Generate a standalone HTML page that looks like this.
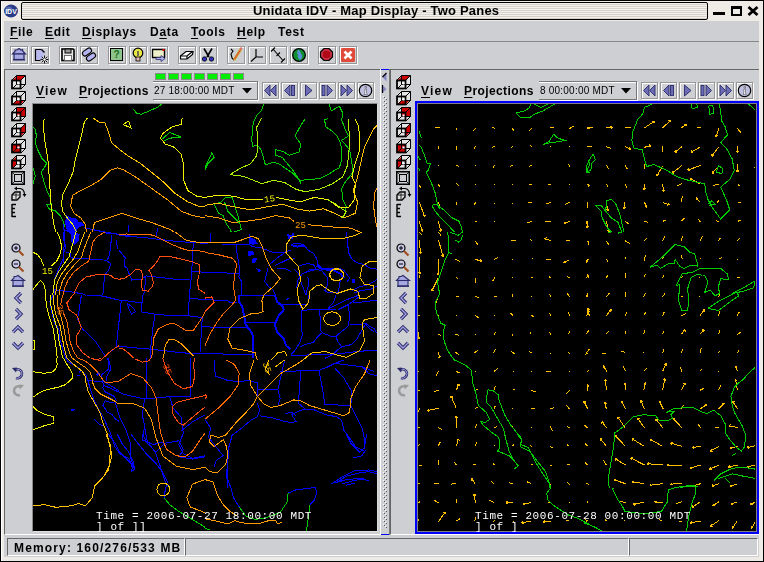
<!DOCTYPE html><html><head><meta charset="utf-8"><style>
*{box-sizing:border-box}
body{margin:0;width:764px;height:562px;overflow:hidden;background:#000;position:relative;font-family:"Liberation Sans",sans-serif}
.a{position:absolute}
.mn,.lbl,.tm,.txt{will-change:transform}
.etch{position:absolute;width:18px;height:18px;border:1px solid #979797;box-shadow:inset 1px 1px 0 #fdfdfd,1px 1px 0 #fdfdfd}
.eb{position:absolute;width:17px;height:17px;border:1px solid #979797;box-shadow:inset 1px 1px 0 #fdfdfd,1px 1px 0 #fdfdfd}
.mn{position:absolute;top:25px;font-weight:bold;font-size:12px;color:#000;line-height:14px;white-space:nowrap;letter-spacing:0.7px}
.u{text-decoration:underline;text-underline-offset:2px}
.lbl{position:absolute;font-weight:bold;font-size:12px;line-height:14px;white-space:nowrap;letter-spacing:0.6px}
.tm{position:absolute;font-size:10px;line-height:12px;white-space:nowrap;letter-spacing:0.22px}
svg{position:absolute;overflow:visible}
.mapsvg{will-change:transform}
</style></head><body>
<div class="a" style="left:1px;top:1px;width:762px;height:560px;background:#eeebe6"></div>
<div class="a" style="left:1px;top:1px;width:1px;height:560px;background:#fff"></div>
<div class="a" style="left:21px;top:2px;width:687px;height:18px;border:1px solid #000;border-radius:2px;background:repeating-linear-gradient(#f3f1ec 0 1px,#d6d2cb 1px 2px)"></div>
<div class="a txt" style="left:253px;top:3px;font-weight:bold;font-size:13px;line-height:16px;white-space:nowrap;letter-spacing:0.2px">Unidata IDV - Map Display - Two Panes</div>
<svg style="left:3px;top:3px" width="16" height="16"><ellipse cx="8" cy="8" rx="7" ry="6.5" fill="#2a3c88"/><ellipse cx="6" cy="6" rx="3" ry="2.5" fill="#7a90c8" opacity="0.6"/><text x="8" y="10.5" font-size="7" font-weight="bold" fill="#fff" text-anchor="middle" font-family="Liberation Sans">IDV</text></svg>
<div class="a" style="left:713px;top:12px;width:12px;height:3px;background:#000"></div>
<div class="a" style="left:731px;top:6px;width:11px;height:10px;border:2px solid #000;border-top-width:3px"></div>
<svg style="left:747px;top:6px" width="12" height="10"><path d="M1.5 1 L10.5 9 M10.5 1 L1.5 9" stroke="#000" stroke-width="2.8"/></svg>
<div class="a" style="left:4px;top:21px;width:755px;height:536px;background:#cecfd2"></div>
<div class="mn" style="left:10px"><span class="u">F</span>ile</div>
<div class="mn" style="left:45px"><span class="u">E</span>dit</div>
<div class="mn" style="left:82px"><span class="u">D</span>isplays</div>
<div class="mn" style="left:150px">D<span class="u">a</span>ta</div>
<div class="mn" style="left:191px"><span class="u">T</span>ools</div>
<div class="mn" style="left:237px"><span class="u">H</span>elp</div>
<div class="mn" style="left:278px">Test</div>
<div class="a" style="left:4px;top:41px;width:755px;height:1px;background:#888"></div>
<div class="etch" style="left:10px;top:46px"></div>
<svg style="left:10px;top:46px" width="18" height="18"><path d="M2.5 8 L5 5.5 L5 4 L7 4 L9 2.5 L11 4 L12.5 3.5 L13 5.5 L15.5 8 Z" fill="#a8a8e0" stroke="#2a2a6a" stroke-width="1.2"/><rect x="4" y="8" width="10" height="5.5" fill="#a8a8e0" stroke="#2a2a6a" stroke-width="1.2"/><path d="M3 13.8 H15" stroke="#2a2a6a" stroke-width="1.4"/></svg>
<div class="etch" style="left:31px;top:46px"></div>
<svg style="left:31px;top:46px" width="18" height="18"><path d="M4.5 3.5 H10.5 L13.5 6.5 V10 M9.5 14.5 H4.5 Z" fill="#c0c0f0"/><rect x="5" y="4" width="7" height="10" fill="#b8b8ec"/><path d="M10.5 3.5 L13.5 6.5" stroke="#000" stroke-width="1.4"/><path d="M4.5 3.5 H10.5 M4.5 3.5 V14.5 H9.5" fill="none" stroke="#000" stroke-width="1.2"/><path d="M13.5 9.5 V17.5 M9.5 13.5 H17.5 M10.7 10.7 L16.3 16.3 M16.3 10.7 L10.7 16.3" stroke="#000" stroke-width="0.9"/><circle cx="13.5" cy="13.5" r="1.2" fill="#fff"/></svg>
<div class="etch" style="left:59px;top:46px"></div>
<svg style="left:59px;top:46px" width="18" height="18"><path d="M3 3 H14 L15 4 V14.5 H3 Z" fill="#e8e8e8" stroke="#000" stroke-width="1.6"/><rect x="6" y="3" width="6" height="4" fill="#999" stroke="#000" stroke-width="1"/><rect x="5.5" y="9.5" width="7" height="5" fill="#fff" stroke="#555" stroke-width="0.8"/></svg>
<div class="etch" style="left:80px;top:46px"></div>
<svg style="left:80px;top:46px" width="18" height="18"><g transform="rotate(-35 7 6)"><rect x="2" y="3.5" width="10" height="5" rx="2.5" fill="#b4b4f0" stroke="#000" stroke-width="1.1"/></g><g transform="rotate(-35 11 11)"><rect x="6" y="8.5" width="10" height="5" rx="2.5" fill="#b4b4f0" stroke="#000" stroke-width="1.1"/></g></svg>
<div class="etch" style="left:108px;top:46px"></div>
<svg style="left:108px;top:46px" width="18" height="18"><rect x="2.5" y="2.5" width="12" height="12" fill="#8cc48c" stroke="#000" stroke-width="1"/><text x="8.5" y="12" font-size="10" font-weight="bold" fill="#1a6a1a" text-anchor="middle" font-family="Liberation Sans">?</text></svg>
<div class="etch" style="left:129px;top:46px"></div>
<svg style="left:129px;top:46px" width="18" height="18"><circle cx="9" cy="7" r="4.8" fill="#e8e840" stroke="#000" stroke-width="1.2"/><rect x="7" y="11" width="4" height="4" fill="#e8b8b8" stroke="#000" stroke-width="0.8"/><rect x="8.2" y="5" width="1.6" height="5" fill="#555"/></svg>
<div class="etch" style="left:150px;top:46px"></div>
<svg style="left:150px;top:46px" width="18" height="18"><rect x="2.5" y="3.5" width="12" height="8" fill="#eeeec8" stroke="#000" stroke-width="1.4"/><rect x="12.5" y="3" width="2" height="2" fill="#e00"/><path d="M6 11.5 H11 V9.5 L15 12.5 L11 15.5 V13.5 H6 Z" fill="#b0b0ee" stroke="#2a2a6a" stroke-width="0.8"/></svg>
<div class="etch" style="left:178px;top:46px"></div>
<svg style="left:178px;top:46px" width="18" height="18"><path d="M2.5 10 L8 5.5 H15 L14.5 8.5 L9 13 H2.5 Z" fill="#fff" stroke="#000" stroke-width="1.2"/><path d="M2.5 10 H9 L14.5 5.5 M9 10 V13" fill="none" stroke="#000" stroke-width="1.2"/></svg>
<div class="etch" style="left:199px;top:46px"></div>
<svg style="left:199px;top:46px" width="18" height="18"><path d="M5 2.5 L10 11 M13 2.5 L8 11" stroke="#000" stroke-width="1.6"/><circle cx="5.5" cy="13" r="2.2" fill="#3030c0" stroke="#000" stroke-width="0.8"/><circle cx="12.5" cy="13" r="2.2" fill="#3030c0" stroke="#000" stroke-width="0.8"/></svg>
<div class="etch" style="left:227px;top:46px"></div>
<svg style="left:227px;top:46px" width="18" height="18"><path d="M4 3 L6 5 L4 8 L5 12 L7 14" fill="none" stroke="#000" stroke-width="1.1"/><path d="M7 14 L14 3" stroke="#d0a020" stroke-width="2.5"/><path d="M7.5 13 L13.5 3.5" stroke="#e04040" stroke-width="1"/><path d="M13 3 L15 2" stroke="#e07070" stroke-width="2"/></svg>
<div class="etch" style="left:248px;top:46px"></div>
<svg style="left:248px;top:46px" width="18" height="18"><path d="M8 3 V11 H15 M8 11 L3 15.5" fill="none" stroke="#000" stroke-width="1.2"/></svg>
<div class="etch" style="left:269px;top:46px"></div>
<svg style="left:269px;top:46px" width="18" height="18"><path d="M4 3 L14 14.5 M2 5.5 L6 1.5 M7.5 10 L11 6.5 M12 16.5 L16 12.5" fill="none" stroke="#000" stroke-width="1.1"/></svg>
<div class="etch" style="left:290px;top:46px"></div>
<svg style="left:290px;top:46px" width="18" height="18"><circle cx="9" cy="9" r="6.3" fill="#109030" stroke="#000" stroke-width="1.3"/><path d="M8.5 3.5 Q6 6 8 8.5 Q7 11 9.5 14 Q12.5 12.5 12 9.5 Q11 7 8.5 3.5Z" fill="#5a90d8"/></svg>
<div class="etch" style="left:318px;top:46px"></div>
<svg style="left:318px;top:46px" width="18" height="18"><path d="M6 2.5 H11 L14.5 6 V11 L11 14.5 H6 L2.5 11 V6 Z" fill="#b00818" stroke="#000" stroke-width="1.2"/><path d="M6.5 4 H10.5 L13 6.5 V10.5 L10.5 13 H6.5 L4 10.5 V6.5 Z" fill="none" stroke="#d86a78" stroke-width="0.8"/></svg>
<div class="etch" style="left:339px;top:46px"></div>
<svg style="left:339px;top:46px" width="18" height="18"><rect x="2" y="2" width="14" height="14" rx="1.5" fill="#e04a38"/><path d="M5.5 5.5 L12.5 12.5 M12.5 5.5 L5.5 12.5" stroke="#fff" stroke-width="2.6"/></svg>
<div class="a" style="left:4px;top:69px;width:377px;height:466px;border-top:1px solid #666;border-left:1px solid #666;border-bottom:1px solid #fff"></div>
<div class="a" style="left:380px;top:69px;width:10px;height:466px;border-left:1px solid #fff;border-right:1px solid #777;background:#cecfd2"></div>
<div class="a" style="left:381px;top:69px;width:8px;height:1px;background:#0000ff"></div>
<div class="a" style="left:381px;top:534px;width:8px;height:1px;background:#0000ff"></div>
<svg style="left:381px;top:72px" width="8" height="24"><path d="M5.5 1 V9.5 L1.5 5 Z" fill="#8888c8"/><path d="M1.5 5 L5.5 1" stroke="#000" stroke-width="1.2"/><path d="M1.5 13 V21 L5.5 17 Z" fill="#8888c8"/><path d="M1.5 13 V21" stroke="#000" stroke-width="1.2"/></svg>
<svg style="left:381px;top:97px" width="8" height="440"><rect x="3" y="0" width="1" height="1" fill="#555"/><rect x="5" y="2" width="1" height="1" fill="#555"/><rect x="2" y="-1" width="1" height="1" fill="#fff"/><rect x="4" y="1" width="1" height="1" fill="#fff"/><rect x="3" y="4" width="1" height="1" fill="#555"/><rect x="5" y="6" width="1" height="1" fill="#555"/><rect x="2" y="3" width="1" height="1" fill="#fff"/><rect x="4" y="5" width="1" height="1" fill="#fff"/><rect x="3" y="8" width="1" height="1" fill="#555"/><rect x="5" y="10" width="1" height="1" fill="#555"/><rect x="2" y="7" width="1" height="1" fill="#fff"/><rect x="4" y="9" width="1" height="1" fill="#fff"/><rect x="3" y="12" width="1" height="1" fill="#555"/><rect x="5" y="14" width="1" height="1" fill="#555"/><rect x="2" y="11" width="1" height="1" fill="#fff"/><rect x="4" y="13" width="1" height="1" fill="#fff"/><rect x="3" y="16" width="1" height="1" fill="#555"/><rect x="5" y="18" width="1" height="1" fill="#555"/><rect x="2" y="15" width="1" height="1" fill="#fff"/><rect x="4" y="17" width="1" height="1" fill="#fff"/><rect x="3" y="20" width="1" height="1" fill="#555"/><rect x="5" y="22" width="1" height="1" fill="#555"/><rect x="2" y="19" width="1" height="1" fill="#fff"/><rect x="4" y="21" width="1" height="1" fill="#fff"/><rect x="3" y="24" width="1" height="1" fill="#555"/><rect x="5" y="26" width="1" height="1" fill="#555"/><rect x="2" y="23" width="1" height="1" fill="#fff"/><rect x="4" y="25" width="1" height="1" fill="#fff"/><rect x="3" y="28" width="1" height="1" fill="#555"/><rect x="5" y="30" width="1" height="1" fill="#555"/><rect x="2" y="27" width="1" height="1" fill="#fff"/><rect x="4" y="29" width="1" height="1" fill="#fff"/><rect x="3" y="32" width="1" height="1" fill="#555"/><rect x="5" y="34" width="1" height="1" fill="#555"/><rect x="2" y="31" width="1" height="1" fill="#fff"/><rect x="4" y="33" width="1" height="1" fill="#fff"/><rect x="3" y="36" width="1" height="1" fill="#555"/><rect x="5" y="38" width="1" height="1" fill="#555"/><rect x="2" y="35" width="1" height="1" fill="#fff"/><rect x="4" y="37" width="1" height="1" fill="#fff"/><rect x="3" y="40" width="1" height="1" fill="#555"/><rect x="5" y="42" width="1" height="1" fill="#555"/><rect x="2" y="39" width="1" height="1" fill="#fff"/><rect x="4" y="41" width="1" height="1" fill="#fff"/><rect x="3" y="44" width="1" height="1" fill="#555"/><rect x="5" y="46" width="1" height="1" fill="#555"/><rect x="2" y="43" width="1" height="1" fill="#fff"/><rect x="4" y="45" width="1" height="1" fill="#fff"/><rect x="3" y="48" width="1" height="1" fill="#555"/><rect x="5" y="50" width="1" height="1" fill="#555"/><rect x="2" y="47" width="1" height="1" fill="#fff"/><rect x="4" y="49" width="1" height="1" fill="#fff"/><rect x="3" y="52" width="1" height="1" fill="#555"/><rect x="5" y="54" width="1" height="1" fill="#555"/><rect x="2" y="51" width="1" height="1" fill="#fff"/><rect x="4" y="53" width="1" height="1" fill="#fff"/><rect x="3" y="56" width="1" height="1" fill="#555"/><rect x="5" y="58" width="1" height="1" fill="#555"/><rect x="2" y="55" width="1" height="1" fill="#fff"/><rect x="4" y="57" width="1" height="1" fill="#fff"/><rect x="3" y="60" width="1" height="1" fill="#555"/><rect x="5" y="62" width="1" height="1" fill="#555"/><rect x="2" y="59" width="1" height="1" fill="#fff"/><rect x="4" y="61" width="1" height="1" fill="#fff"/><rect x="3" y="64" width="1" height="1" fill="#555"/><rect x="5" y="66" width="1" height="1" fill="#555"/><rect x="2" y="63" width="1" height="1" fill="#fff"/><rect x="4" y="65" width="1" height="1" fill="#fff"/><rect x="3" y="68" width="1" height="1" fill="#555"/><rect x="5" y="70" width="1" height="1" fill="#555"/><rect x="2" y="67" width="1" height="1" fill="#fff"/><rect x="4" y="69" width="1" height="1" fill="#fff"/><rect x="3" y="72" width="1" height="1" fill="#555"/><rect x="5" y="74" width="1" height="1" fill="#555"/><rect x="2" y="71" width="1" height="1" fill="#fff"/><rect x="4" y="73" width="1" height="1" fill="#fff"/><rect x="3" y="76" width="1" height="1" fill="#555"/><rect x="5" y="78" width="1" height="1" fill="#555"/><rect x="2" y="75" width="1" height="1" fill="#fff"/><rect x="4" y="77" width="1" height="1" fill="#fff"/><rect x="3" y="80" width="1" height="1" fill="#555"/><rect x="5" y="82" width="1" height="1" fill="#555"/><rect x="2" y="79" width="1" height="1" fill="#fff"/><rect x="4" y="81" width="1" height="1" fill="#fff"/><rect x="3" y="84" width="1" height="1" fill="#555"/><rect x="5" y="86" width="1" height="1" fill="#555"/><rect x="2" y="83" width="1" height="1" fill="#fff"/><rect x="4" y="85" width="1" height="1" fill="#fff"/><rect x="3" y="88" width="1" height="1" fill="#555"/><rect x="5" y="90" width="1" height="1" fill="#555"/><rect x="2" y="87" width="1" height="1" fill="#fff"/><rect x="4" y="89" width="1" height="1" fill="#fff"/><rect x="3" y="92" width="1" height="1" fill="#555"/><rect x="5" y="94" width="1" height="1" fill="#555"/><rect x="2" y="91" width="1" height="1" fill="#fff"/><rect x="4" y="93" width="1" height="1" fill="#fff"/><rect x="3" y="96" width="1" height="1" fill="#555"/><rect x="5" y="98" width="1" height="1" fill="#555"/><rect x="2" y="95" width="1" height="1" fill="#fff"/><rect x="4" y="97" width="1" height="1" fill="#fff"/><rect x="3" y="100" width="1" height="1" fill="#555"/><rect x="5" y="102" width="1" height="1" fill="#555"/><rect x="2" y="99" width="1" height="1" fill="#fff"/><rect x="4" y="101" width="1" height="1" fill="#fff"/><rect x="3" y="104" width="1" height="1" fill="#555"/><rect x="5" y="106" width="1" height="1" fill="#555"/><rect x="2" y="103" width="1" height="1" fill="#fff"/><rect x="4" y="105" width="1" height="1" fill="#fff"/><rect x="3" y="108" width="1" height="1" fill="#555"/><rect x="5" y="110" width="1" height="1" fill="#555"/><rect x="2" y="107" width="1" height="1" fill="#fff"/><rect x="4" y="109" width="1" height="1" fill="#fff"/><rect x="3" y="112" width="1" height="1" fill="#555"/><rect x="5" y="114" width="1" height="1" fill="#555"/><rect x="2" y="111" width="1" height="1" fill="#fff"/><rect x="4" y="113" width="1" height="1" fill="#fff"/><rect x="3" y="116" width="1" height="1" fill="#555"/><rect x="5" y="118" width="1" height="1" fill="#555"/><rect x="2" y="115" width="1" height="1" fill="#fff"/><rect x="4" y="117" width="1" height="1" fill="#fff"/><rect x="3" y="120" width="1" height="1" fill="#555"/><rect x="5" y="122" width="1" height="1" fill="#555"/><rect x="2" y="119" width="1" height="1" fill="#fff"/><rect x="4" y="121" width="1" height="1" fill="#fff"/><rect x="3" y="124" width="1" height="1" fill="#555"/><rect x="5" y="126" width="1" height="1" fill="#555"/><rect x="2" y="123" width="1" height="1" fill="#fff"/><rect x="4" y="125" width="1" height="1" fill="#fff"/><rect x="3" y="128" width="1" height="1" fill="#555"/><rect x="5" y="130" width="1" height="1" fill="#555"/><rect x="2" y="127" width="1" height="1" fill="#fff"/><rect x="4" y="129" width="1" height="1" fill="#fff"/><rect x="3" y="132" width="1" height="1" fill="#555"/><rect x="5" y="134" width="1" height="1" fill="#555"/><rect x="2" y="131" width="1" height="1" fill="#fff"/><rect x="4" y="133" width="1" height="1" fill="#fff"/><rect x="3" y="136" width="1" height="1" fill="#555"/><rect x="5" y="138" width="1" height="1" fill="#555"/><rect x="2" y="135" width="1" height="1" fill="#fff"/><rect x="4" y="137" width="1" height="1" fill="#fff"/><rect x="3" y="140" width="1" height="1" fill="#555"/><rect x="5" y="142" width="1" height="1" fill="#555"/><rect x="2" y="139" width="1" height="1" fill="#fff"/><rect x="4" y="141" width="1" height="1" fill="#fff"/><rect x="3" y="144" width="1" height="1" fill="#555"/><rect x="5" y="146" width="1" height="1" fill="#555"/><rect x="2" y="143" width="1" height="1" fill="#fff"/><rect x="4" y="145" width="1" height="1" fill="#fff"/><rect x="3" y="148" width="1" height="1" fill="#555"/><rect x="5" y="150" width="1" height="1" fill="#555"/><rect x="2" y="147" width="1" height="1" fill="#fff"/><rect x="4" y="149" width="1" height="1" fill="#fff"/><rect x="3" y="152" width="1" height="1" fill="#555"/><rect x="5" y="154" width="1" height="1" fill="#555"/><rect x="2" y="151" width="1" height="1" fill="#fff"/><rect x="4" y="153" width="1" height="1" fill="#fff"/><rect x="3" y="156" width="1" height="1" fill="#555"/><rect x="5" y="158" width="1" height="1" fill="#555"/><rect x="2" y="155" width="1" height="1" fill="#fff"/><rect x="4" y="157" width="1" height="1" fill="#fff"/><rect x="3" y="160" width="1" height="1" fill="#555"/><rect x="5" y="162" width="1" height="1" fill="#555"/><rect x="2" y="159" width="1" height="1" fill="#fff"/><rect x="4" y="161" width="1" height="1" fill="#fff"/><rect x="3" y="164" width="1" height="1" fill="#555"/><rect x="5" y="166" width="1" height="1" fill="#555"/><rect x="2" y="163" width="1" height="1" fill="#fff"/><rect x="4" y="165" width="1" height="1" fill="#fff"/><rect x="3" y="168" width="1" height="1" fill="#555"/><rect x="5" y="170" width="1" height="1" fill="#555"/><rect x="2" y="167" width="1" height="1" fill="#fff"/><rect x="4" y="169" width="1" height="1" fill="#fff"/><rect x="3" y="172" width="1" height="1" fill="#555"/><rect x="5" y="174" width="1" height="1" fill="#555"/><rect x="2" y="171" width="1" height="1" fill="#fff"/><rect x="4" y="173" width="1" height="1" fill="#fff"/><rect x="3" y="176" width="1" height="1" fill="#555"/><rect x="5" y="178" width="1" height="1" fill="#555"/><rect x="2" y="175" width="1" height="1" fill="#fff"/><rect x="4" y="177" width="1" height="1" fill="#fff"/><rect x="3" y="180" width="1" height="1" fill="#555"/><rect x="5" y="182" width="1" height="1" fill="#555"/><rect x="2" y="179" width="1" height="1" fill="#fff"/><rect x="4" y="181" width="1" height="1" fill="#fff"/><rect x="3" y="184" width="1" height="1" fill="#555"/><rect x="5" y="186" width="1" height="1" fill="#555"/><rect x="2" y="183" width="1" height="1" fill="#fff"/><rect x="4" y="185" width="1" height="1" fill="#fff"/><rect x="3" y="188" width="1" height="1" fill="#555"/><rect x="5" y="190" width="1" height="1" fill="#555"/><rect x="2" y="187" width="1" height="1" fill="#fff"/><rect x="4" y="189" width="1" height="1" fill="#fff"/><rect x="3" y="192" width="1" height="1" fill="#555"/><rect x="5" y="194" width="1" height="1" fill="#555"/><rect x="2" y="191" width="1" height="1" fill="#fff"/><rect x="4" y="193" width="1" height="1" fill="#fff"/><rect x="3" y="196" width="1" height="1" fill="#555"/><rect x="5" y="198" width="1" height="1" fill="#555"/><rect x="2" y="195" width="1" height="1" fill="#fff"/><rect x="4" y="197" width="1" height="1" fill="#fff"/><rect x="3" y="200" width="1" height="1" fill="#555"/><rect x="5" y="202" width="1" height="1" fill="#555"/><rect x="2" y="199" width="1" height="1" fill="#fff"/><rect x="4" y="201" width="1" height="1" fill="#fff"/><rect x="3" y="204" width="1" height="1" fill="#555"/><rect x="5" y="206" width="1" height="1" fill="#555"/><rect x="2" y="203" width="1" height="1" fill="#fff"/><rect x="4" y="205" width="1" height="1" fill="#fff"/><rect x="3" y="208" width="1" height="1" fill="#555"/><rect x="5" y="210" width="1" height="1" fill="#555"/><rect x="2" y="207" width="1" height="1" fill="#fff"/><rect x="4" y="209" width="1" height="1" fill="#fff"/><rect x="3" y="212" width="1" height="1" fill="#555"/><rect x="5" y="214" width="1" height="1" fill="#555"/><rect x="2" y="211" width="1" height="1" fill="#fff"/><rect x="4" y="213" width="1" height="1" fill="#fff"/><rect x="3" y="216" width="1" height="1" fill="#555"/><rect x="5" y="218" width="1" height="1" fill="#555"/><rect x="2" y="215" width="1" height="1" fill="#fff"/><rect x="4" y="217" width="1" height="1" fill="#fff"/><rect x="3" y="220" width="1" height="1" fill="#555"/><rect x="5" y="222" width="1" height="1" fill="#555"/><rect x="2" y="219" width="1" height="1" fill="#fff"/><rect x="4" y="221" width="1" height="1" fill="#fff"/><rect x="3" y="224" width="1" height="1" fill="#555"/><rect x="5" y="226" width="1" height="1" fill="#555"/><rect x="2" y="223" width="1" height="1" fill="#fff"/><rect x="4" y="225" width="1" height="1" fill="#fff"/><rect x="3" y="228" width="1" height="1" fill="#555"/><rect x="5" y="230" width="1" height="1" fill="#555"/><rect x="2" y="227" width="1" height="1" fill="#fff"/><rect x="4" y="229" width="1" height="1" fill="#fff"/><rect x="3" y="232" width="1" height="1" fill="#555"/><rect x="5" y="234" width="1" height="1" fill="#555"/><rect x="2" y="231" width="1" height="1" fill="#fff"/><rect x="4" y="233" width="1" height="1" fill="#fff"/><rect x="3" y="236" width="1" height="1" fill="#555"/><rect x="5" y="238" width="1" height="1" fill="#555"/><rect x="2" y="235" width="1" height="1" fill="#fff"/><rect x="4" y="237" width="1" height="1" fill="#fff"/><rect x="3" y="240" width="1" height="1" fill="#555"/><rect x="5" y="242" width="1" height="1" fill="#555"/><rect x="2" y="239" width="1" height="1" fill="#fff"/><rect x="4" y="241" width="1" height="1" fill="#fff"/><rect x="3" y="244" width="1" height="1" fill="#555"/><rect x="5" y="246" width="1" height="1" fill="#555"/><rect x="2" y="243" width="1" height="1" fill="#fff"/><rect x="4" y="245" width="1" height="1" fill="#fff"/><rect x="3" y="248" width="1" height="1" fill="#555"/><rect x="5" y="250" width="1" height="1" fill="#555"/><rect x="2" y="247" width="1" height="1" fill="#fff"/><rect x="4" y="249" width="1" height="1" fill="#fff"/><rect x="3" y="252" width="1" height="1" fill="#555"/><rect x="5" y="254" width="1" height="1" fill="#555"/><rect x="2" y="251" width="1" height="1" fill="#fff"/><rect x="4" y="253" width="1" height="1" fill="#fff"/><rect x="3" y="256" width="1" height="1" fill="#555"/><rect x="5" y="258" width="1" height="1" fill="#555"/><rect x="2" y="255" width="1" height="1" fill="#fff"/><rect x="4" y="257" width="1" height="1" fill="#fff"/><rect x="3" y="260" width="1" height="1" fill="#555"/><rect x="5" y="262" width="1" height="1" fill="#555"/><rect x="2" y="259" width="1" height="1" fill="#fff"/><rect x="4" y="261" width="1" height="1" fill="#fff"/><rect x="3" y="264" width="1" height="1" fill="#555"/><rect x="5" y="266" width="1" height="1" fill="#555"/><rect x="2" y="263" width="1" height="1" fill="#fff"/><rect x="4" y="265" width="1" height="1" fill="#fff"/><rect x="3" y="268" width="1" height="1" fill="#555"/><rect x="5" y="270" width="1" height="1" fill="#555"/><rect x="2" y="267" width="1" height="1" fill="#fff"/><rect x="4" y="269" width="1" height="1" fill="#fff"/><rect x="3" y="272" width="1" height="1" fill="#555"/><rect x="5" y="274" width="1" height="1" fill="#555"/><rect x="2" y="271" width="1" height="1" fill="#fff"/><rect x="4" y="273" width="1" height="1" fill="#fff"/><rect x="3" y="276" width="1" height="1" fill="#555"/><rect x="5" y="278" width="1" height="1" fill="#555"/><rect x="2" y="275" width="1" height="1" fill="#fff"/><rect x="4" y="277" width="1" height="1" fill="#fff"/><rect x="3" y="280" width="1" height="1" fill="#555"/><rect x="5" y="282" width="1" height="1" fill="#555"/><rect x="2" y="279" width="1" height="1" fill="#fff"/><rect x="4" y="281" width="1" height="1" fill="#fff"/><rect x="3" y="284" width="1" height="1" fill="#555"/><rect x="5" y="286" width="1" height="1" fill="#555"/><rect x="2" y="283" width="1" height="1" fill="#fff"/><rect x="4" y="285" width="1" height="1" fill="#fff"/><rect x="3" y="288" width="1" height="1" fill="#555"/><rect x="5" y="290" width="1" height="1" fill="#555"/><rect x="2" y="287" width="1" height="1" fill="#fff"/><rect x="4" y="289" width="1" height="1" fill="#fff"/><rect x="3" y="292" width="1" height="1" fill="#555"/><rect x="5" y="294" width="1" height="1" fill="#555"/><rect x="2" y="291" width="1" height="1" fill="#fff"/><rect x="4" y="293" width="1" height="1" fill="#fff"/><rect x="3" y="296" width="1" height="1" fill="#555"/><rect x="5" y="298" width="1" height="1" fill="#555"/><rect x="2" y="295" width="1" height="1" fill="#fff"/><rect x="4" y="297" width="1" height="1" fill="#fff"/><rect x="3" y="300" width="1" height="1" fill="#555"/><rect x="5" y="302" width="1" height="1" fill="#555"/><rect x="2" y="299" width="1" height="1" fill="#fff"/><rect x="4" y="301" width="1" height="1" fill="#fff"/><rect x="3" y="304" width="1" height="1" fill="#555"/><rect x="5" y="306" width="1" height="1" fill="#555"/><rect x="2" y="303" width="1" height="1" fill="#fff"/><rect x="4" y="305" width="1" height="1" fill="#fff"/><rect x="3" y="308" width="1" height="1" fill="#555"/><rect x="5" y="310" width="1" height="1" fill="#555"/><rect x="2" y="307" width="1" height="1" fill="#fff"/><rect x="4" y="309" width="1" height="1" fill="#fff"/><rect x="3" y="312" width="1" height="1" fill="#555"/><rect x="5" y="314" width="1" height="1" fill="#555"/><rect x="2" y="311" width="1" height="1" fill="#fff"/><rect x="4" y="313" width="1" height="1" fill="#fff"/><rect x="3" y="316" width="1" height="1" fill="#555"/><rect x="5" y="318" width="1" height="1" fill="#555"/><rect x="2" y="315" width="1" height="1" fill="#fff"/><rect x="4" y="317" width="1" height="1" fill="#fff"/><rect x="3" y="320" width="1" height="1" fill="#555"/><rect x="5" y="322" width="1" height="1" fill="#555"/><rect x="2" y="319" width="1" height="1" fill="#fff"/><rect x="4" y="321" width="1" height="1" fill="#fff"/><rect x="3" y="324" width="1" height="1" fill="#555"/><rect x="5" y="326" width="1" height="1" fill="#555"/><rect x="2" y="323" width="1" height="1" fill="#fff"/><rect x="4" y="325" width="1" height="1" fill="#fff"/><rect x="3" y="328" width="1" height="1" fill="#555"/><rect x="5" y="330" width="1" height="1" fill="#555"/><rect x="2" y="327" width="1" height="1" fill="#fff"/><rect x="4" y="329" width="1" height="1" fill="#fff"/><rect x="3" y="332" width="1" height="1" fill="#555"/><rect x="5" y="334" width="1" height="1" fill="#555"/><rect x="2" y="331" width="1" height="1" fill="#fff"/><rect x="4" y="333" width="1" height="1" fill="#fff"/><rect x="3" y="336" width="1" height="1" fill="#555"/><rect x="5" y="338" width="1" height="1" fill="#555"/><rect x="2" y="335" width="1" height="1" fill="#fff"/><rect x="4" y="337" width="1" height="1" fill="#fff"/><rect x="3" y="340" width="1" height="1" fill="#555"/><rect x="5" y="342" width="1" height="1" fill="#555"/><rect x="2" y="339" width="1" height="1" fill="#fff"/><rect x="4" y="341" width="1" height="1" fill="#fff"/><rect x="3" y="344" width="1" height="1" fill="#555"/><rect x="5" y="346" width="1" height="1" fill="#555"/><rect x="2" y="343" width="1" height="1" fill="#fff"/><rect x="4" y="345" width="1" height="1" fill="#fff"/><rect x="3" y="348" width="1" height="1" fill="#555"/><rect x="5" y="350" width="1" height="1" fill="#555"/><rect x="2" y="347" width="1" height="1" fill="#fff"/><rect x="4" y="349" width="1" height="1" fill="#fff"/><rect x="3" y="352" width="1" height="1" fill="#555"/><rect x="5" y="354" width="1" height="1" fill="#555"/><rect x="2" y="351" width="1" height="1" fill="#fff"/><rect x="4" y="353" width="1" height="1" fill="#fff"/><rect x="3" y="356" width="1" height="1" fill="#555"/><rect x="5" y="358" width="1" height="1" fill="#555"/><rect x="2" y="355" width="1" height="1" fill="#fff"/><rect x="4" y="357" width="1" height="1" fill="#fff"/><rect x="3" y="360" width="1" height="1" fill="#555"/><rect x="5" y="362" width="1" height="1" fill="#555"/><rect x="2" y="359" width="1" height="1" fill="#fff"/><rect x="4" y="361" width="1" height="1" fill="#fff"/><rect x="3" y="364" width="1" height="1" fill="#555"/><rect x="5" y="366" width="1" height="1" fill="#555"/><rect x="2" y="363" width="1" height="1" fill="#fff"/><rect x="4" y="365" width="1" height="1" fill="#fff"/><rect x="3" y="368" width="1" height="1" fill="#555"/><rect x="5" y="370" width="1" height="1" fill="#555"/><rect x="2" y="367" width="1" height="1" fill="#fff"/><rect x="4" y="369" width="1" height="1" fill="#fff"/><rect x="3" y="372" width="1" height="1" fill="#555"/><rect x="5" y="374" width="1" height="1" fill="#555"/><rect x="2" y="371" width="1" height="1" fill="#fff"/><rect x="4" y="373" width="1" height="1" fill="#fff"/><rect x="3" y="376" width="1" height="1" fill="#555"/><rect x="5" y="378" width="1" height="1" fill="#555"/><rect x="2" y="375" width="1" height="1" fill="#fff"/><rect x="4" y="377" width="1" height="1" fill="#fff"/><rect x="3" y="380" width="1" height="1" fill="#555"/><rect x="5" y="382" width="1" height="1" fill="#555"/><rect x="2" y="379" width="1" height="1" fill="#fff"/><rect x="4" y="381" width="1" height="1" fill="#fff"/><rect x="3" y="384" width="1" height="1" fill="#555"/><rect x="5" y="386" width="1" height="1" fill="#555"/><rect x="2" y="383" width="1" height="1" fill="#fff"/><rect x="4" y="385" width="1" height="1" fill="#fff"/><rect x="3" y="388" width="1" height="1" fill="#555"/><rect x="5" y="390" width="1" height="1" fill="#555"/><rect x="2" y="387" width="1" height="1" fill="#fff"/><rect x="4" y="389" width="1" height="1" fill="#fff"/><rect x="3" y="392" width="1" height="1" fill="#555"/><rect x="5" y="394" width="1" height="1" fill="#555"/><rect x="2" y="391" width="1" height="1" fill="#fff"/><rect x="4" y="393" width="1" height="1" fill="#fff"/><rect x="3" y="396" width="1" height="1" fill="#555"/><rect x="5" y="398" width="1" height="1" fill="#555"/><rect x="2" y="395" width="1" height="1" fill="#fff"/><rect x="4" y="397" width="1" height="1" fill="#fff"/><rect x="3" y="400" width="1" height="1" fill="#555"/><rect x="5" y="402" width="1" height="1" fill="#555"/><rect x="2" y="399" width="1" height="1" fill="#fff"/><rect x="4" y="401" width="1" height="1" fill="#fff"/><rect x="3" y="404" width="1" height="1" fill="#555"/><rect x="5" y="406" width="1" height="1" fill="#555"/><rect x="2" y="403" width="1" height="1" fill="#fff"/><rect x="4" y="405" width="1" height="1" fill="#fff"/><rect x="3" y="408" width="1" height="1" fill="#555"/><rect x="5" y="410" width="1" height="1" fill="#555"/><rect x="2" y="407" width="1" height="1" fill="#fff"/><rect x="4" y="409" width="1" height="1" fill="#fff"/><rect x="3" y="412" width="1" height="1" fill="#555"/><rect x="5" y="414" width="1" height="1" fill="#555"/><rect x="2" y="411" width="1" height="1" fill="#fff"/><rect x="4" y="413" width="1" height="1" fill="#fff"/><rect x="3" y="416" width="1" height="1" fill="#555"/><rect x="5" y="418" width="1" height="1" fill="#555"/><rect x="2" y="415" width="1" height="1" fill="#fff"/><rect x="4" y="417" width="1" height="1" fill="#fff"/><rect x="3" y="420" width="1" height="1" fill="#555"/><rect x="5" y="422" width="1" height="1" fill="#555"/><rect x="2" y="419" width="1" height="1" fill="#fff"/><rect x="4" y="421" width="1" height="1" fill="#fff"/><rect x="3" y="424" width="1" height="1" fill="#555"/><rect x="5" y="426" width="1" height="1" fill="#555"/><rect x="2" y="423" width="1" height="1" fill="#fff"/><rect x="4" y="425" width="1" height="1" fill="#fff"/><rect x="3" y="428" width="1" height="1" fill="#555"/><rect x="5" y="430" width="1" height="1" fill="#555"/><rect x="2" y="427" width="1" height="1" fill="#fff"/><rect x="4" y="429" width="1" height="1" fill="#fff"/></svg>
<div class="a" style="left:390px;top:69px;width:369px;height:466px;border-top:1px solid #666;border-left:1px solid #666;border-bottom:1px solid #fff"></div>
<svg style="left:11px;top:75px" width="15" height="15"><path d="M0 5 L5 0 H15 V10 L10 15 H0 Z" fill="#e4e4e4"/><path d="M1 6 L6 1 H14 L9 6 Z" fill="#cc0000"/><path d="M5.5 0.5 H14.5 V9.5 H5.5 Z" fill="none" stroke="#000" stroke-width="1"/><path d="M1 5 L5.5 0.5 M10 5 L14.5 0.5 M10 14 L14.5 9.5 M1 14 L5.5 9.5" stroke="#000" stroke-width="1"/><rect x="1" y="5.5" width="8.5" height="8" fill="none" stroke="#000" stroke-width="1.8"/><rect x="6.5" y="7.5" width="2" height="2" fill="#fff"/></svg>
<svg style="left:11px;top:91px" width="15" height="15"><path d="M0 5 L5 0 H15 V10 L10 15 H0 Z" fill="#e4e4e4"/><path d="M1 14 L6 9 H14 L9 14 Z" fill="#cc0000"/><path d="M5.5 0.5 H14.5 V9.5 H5.5 Z" fill="none" stroke="#000" stroke-width="1"/><path d="M1 5 L5.5 0.5 M10 5 L14.5 0.5 M10 14 L14.5 9.5 M1 14 L5.5 9.5" stroke="#000" stroke-width="1"/><rect x="1" y="5.5" width="8.5" height="8" fill="none" stroke="#000" stroke-width="1.8"/><rect x="6.5" y="7.5" width="2" height="2" fill="#fff"/></svg>
<svg style="left:11px;top:107px" width="15" height="15"><path d="M0 5 L5 0 H15 V10 L10 15 H0 Z" fill="#e4e4e4"/><rect x="5.5" y="0.5" width="9" height="9" fill="#cc0000"/><path d="M5.5 0.5 H14.5 V9.5 H5.5 Z" fill="none" stroke="#000" stroke-width="1"/><path d="M1 5 L5.5 0.5 M10 5 L14.5 0.5 M10 14 L14.5 9.5 M1 14 L5.5 9.5" stroke="#000" stroke-width="1"/><rect x="1" y="5.5" width="8.5" height="8" fill="none" stroke="#000" stroke-width="1.8"/><rect x="6.5" y="7.5" width="2" height="2" fill="#fff"/></svg>
<svg style="left:11px;top:123px" width="15" height="15"><path d="M0 5 L5 0 H15 V10 L10 15 H0 Z" fill="#e4e4e4"/><path d="M9 6 L14 1 V9 L9 14 Z" fill="#cc0000"/><path d="M5.5 0.5 H14.5 V9.5 H5.5 Z" fill="none" stroke="#000" stroke-width="1"/><path d="M1 5 L5.5 0.5 M10 5 L14.5 0.5 M10 14 L14.5 9.5 M1 14 L5.5 9.5" stroke="#000" stroke-width="1"/><rect x="1" y="5.5" width="8.5" height="8" fill="none" stroke="#000" stroke-width="1.8"/><rect x="6.5" y="7.5" width="2" height="2" fill="#fff"/></svg>
<svg style="left:11px;top:139px" width="15" height="15"><path d="M0 5 L5 0 H15 V10 L10 15 H0 Z" fill="#e4e4e4"/><rect x="1" y="5" width="9" height="9" fill="#cc0000"/><path d="M5.5 0.5 H14.5 V9.5 H5.5 Z" fill="none" stroke="#000" stroke-width="1"/><path d="M1 5 L5.5 0.5 M10 5 L14.5 0.5 M10 14 L14.5 9.5 M1 14 L5.5 9.5" stroke="#000" stroke-width="1"/><rect x="1" y="5.5" width="8.5" height="8" fill="none" stroke="#000" stroke-width="1.8"/><rect x="6.5" y="7.5" width="2" height="2" fill="#fff"/></svg>
<svg style="left:11px;top:155px" width="15" height="15"><path d="M0 5 L5 0 H15 V10 L10 15 H0 Z" fill="#e4e4e4"/><path d="M1 6 L6 1 V9 L1 14 Z" fill="#cc0000"/><path d="M5.5 0.5 H14.5 V9.5 H5.5 Z" fill="none" stroke="#000" stroke-width="1"/><path d="M1 5 L5.5 0.5 M10 5 L14.5 0.5 M10 14 L14.5 9.5 M1 14 L5.5 9.5" stroke="#000" stroke-width="1"/><rect x="1" y="5.5" width="8.5" height="8" fill="none" stroke="#000" stroke-width="1.8"/><rect x="6.5" y="7.5" width="2" height="2" fill="#fff"/></svg>
<svg style="left:11px;top:171px" width="14" height="14"><rect x="0.75" y="0.75" width="12.5" height="12.5" fill="none" stroke="#000" stroke-width="1.5"/><rect x="3.5" y="3.5" width="7" height="7" fill="none" stroke="#000" stroke-width="1"/><path d="M1 1 L3.5 3.5 M13 1 L10.5 3.5 M1 13 L3.5 10.5 M13 13 L10.5 10.5" stroke="#000" stroke-width="0.8"/></svg>
<svg style="left:11px;top:186px" width="16" height="16"><path d="M5 2.5 H9 Q13 3 13.5 8" fill="none" stroke="#000" stroke-width="1.2"/><path d="M3 2.5 L6 0.5 V4.5 Z M11.5 8 H15.5 L13.5 11 Z" fill="#000"/><path d="M1 9 L4 6 H9 V11 L6 14 H1 Z" fill="#ddd" stroke="#000" stroke-width="1.4"/><path d="M2 9 H8 M5 7 V13" stroke="#000" stroke-width="0.8"/></svg>
<svg style="left:11px;top:203px" width="6" height="15"><path d="M1 1 V14 M1 1.5 H5 M1 5.5 H4 M1 9.5 H4 M1 13.5 H5" stroke="#000" stroke-width="1.4" fill="none"/></svg>
<svg style="left:11px;top:243px" width="14" height="14"><circle cx="5" cy="5" r="4" fill="#c8c8e8" stroke="#000" stroke-width="1.2"/><path d="M3 5 H7 M5 3 V7" stroke="#000" stroke-width="1"/><path d="M8 8 L12.5 12.5" stroke="#a05020" stroke-width="2.2"/></svg>
<svg style="left:11px;top:259px" width="14" height="14"><circle cx="5" cy="5" r="4" fill="#c8c8e8" stroke="#000" stroke-width="1.2"/><path d="M3 5 H7" stroke="#000" stroke-width="1"/><path d="M8 8 L12.5 12.5" stroke="#a05020" stroke-width="2.2"/></svg>
<svg style="left:11px;top:275px" width="14" height="13"><path d="M0.5 5.5 L3 3 V1.5 H5 L7 0.5 L13.5 5.5 Z" fill="#a8a8e0" stroke="#2a2a6a" stroke-width="1.1"/><rect x="2" y="5.5" width="10" height="5.5" fill="#a8a8e0" stroke="#2a2a6a" stroke-width="1.1"/><path d="M1 11.2 H13" stroke="#2a2a6a" stroke-width="1.3"/></svg>
<svg style="left:13px;top:292px" width="12" height="12"><path d="M8 1 L3 6 L8 11" fill="none" stroke="#2a2a6a" stroke-width="3.2" stroke-linejoin="miter"/><path d="M8 1 L3 6 L8 11" fill="none" stroke="#a0a0e0" stroke-width="1.4"/></svg>
<svg style="left:13px;top:308px" width="12" height="12"><path d="M3 1 L8 6 L3 11" fill="none" stroke="#2a2a6a" stroke-width="3.2" stroke-linejoin="miter"/><path d="M3 1 L8 6 L3 11" fill="none" stroke="#a0a0e0" stroke-width="1.4"/></svg>
<svg style="left:12px;top:324px" width="12" height="12"><path d="M1 8 L6 3 L11 8" fill="none" stroke="#2a2a6a" stroke-width="3.2" stroke-linejoin="miter"/><path d="M1 8 L6 3 L11 8" fill="none" stroke="#a0a0e0" stroke-width="1.4"/></svg>
<svg style="left:12px;top:340px" width="12" height="12"><path d="M1 3 L6 8 L11 3" fill="none" stroke="#2a2a6a" stroke-width="3.2" stroke-linejoin="miter"/><path d="M1 3 L6 8 L11 3" fill="none" stroke="#a0a0e0" stroke-width="1.4"/></svg>
<svg style="left:11px;top:366px" width="14" height="15"><path d="M4 4 A4.5 4.5 0 1 1 5 12" fill="none" stroke="#2a2a6a" stroke-width="2.6"/><path d="M4 4 A4.5 4.5 0 1 1 5 12" fill="none" stroke="#a0a0e0" stroke-width="1"/><path d="M1 2 L6 1.5 L5 6.5 Z" fill="#2a2a6a"/></svg>
<svg style="left:11px;top:383px" width="14" height="15"><path d="M10 4 A4.5 4.5 0 1 0 9 12" fill="none" stroke="#9a9a9a" stroke-width="2.6"/><path d="M13 2 L8 1.5 L9 6.5 Z" fill="#9a9a9a"/></svg>
<svg style="left:396px;top:75px" width="15" height="15"><path d="M0 5 L5 0 H15 V10 L10 15 H0 Z" fill="#e4e4e4"/><path d="M1 6 L6 1 H14 L9 6 Z" fill="#cc0000"/><path d="M5.5 0.5 H14.5 V9.5 H5.5 Z" fill="none" stroke="#000" stroke-width="1"/><path d="M1 5 L5.5 0.5 M10 5 L14.5 0.5 M10 14 L14.5 9.5 M1 14 L5.5 9.5" stroke="#000" stroke-width="1"/><rect x="1" y="5.5" width="8.5" height="8" fill="none" stroke="#000" stroke-width="1.8"/><rect x="6.5" y="7.5" width="2" height="2" fill="#fff"/></svg>
<svg style="left:396px;top:91px" width="15" height="15"><path d="M0 5 L5 0 H15 V10 L10 15 H0 Z" fill="#e4e4e4"/><path d="M1 14 L6 9 H14 L9 14 Z" fill="#cc0000"/><path d="M5.5 0.5 H14.5 V9.5 H5.5 Z" fill="none" stroke="#000" stroke-width="1"/><path d="M1 5 L5.5 0.5 M10 5 L14.5 0.5 M10 14 L14.5 9.5 M1 14 L5.5 9.5" stroke="#000" stroke-width="1"/><rect x="1" y="5.5" width="8.5" height="8" fill="none" stroke="#000" stroke-width="1.8"/><rect x="6.5" y="7.5" width="2" height="2" fill="#fff"/></svg>
<svg style="left:396px;top:107px" width="15" height="15"><path d="M0 5 L5 0 H15 V10 L10 15 H0 Z" fill="#e4e4e4"/><rect x="5.5" y="0.5" width="9" height="9" fill="#cc0000"/><path d="M5.5 0.5 H14.5 V9.5 H5.5 Z" fill="none" stroke="#000" stroke-width="1"/><path d="M1 5 L5.5 0.5 M10 5 L14.5 0.5 M10 14 L14.5 9.5 M1 14 L5.5 9.5" stroke="#000" stroke-width="1"/><rect x="1" y="5.5" width="8.5" height="8" fill="none" stroke="#000" stroke-width="1.8"/><rect x="6.5" y="7.5" width="2" height="2" fill="#fff"/></svg>
<svg style="left:396px;top:123px" width="15" height="15"><path d="M0 5 L5 0 H15 V10 L10 15 H0 Z" fill="#e4e4e4"/><path d="M9 6 L14 1 V9 L9 14 Z" fill="#cc0000"/><path d="M5.5 0.5 H14.5 V9.5 H5.5 Z" fill="none" stroke="#000" stroke-width="1"/><path d="M1 5 L5.5 0.5 M10 5 L14.5 0.5 M10 14 L14.5 9.5 M1 14 L5.5 9.5" stroke="#000" stroke-width="1"/><rect x="1" y="5.5" width="8.5" height="8" fill="none" stroke="#000" stroke-width="1.8"/><rect x="6.5" y="7.5" width="2" height="2" fill="#fff"/></svg>
<svg style="left:396px;top:139px" width="15" height="15"><path d="M0 5 L5 0 H15 V10 L10 15 H0 Z" fill="#e4e4e4"/><rect x="1" y="5" width="9" height="9" fill="#cc0000"/><path d="M5.5 0.5 H14.5 V9.5 H5.5 Z" fill="none" stroke="#000" stroke-width="1"/><path d="M1 5 L5.5 0.5 M10 5 L14.5 0.5 M10 14 L14.5 9.5 M1 14 L5.5 9.5" stroke="#000" stroke-width="1"/><rect x="1" y="5.5" width="8.5" height="8" fill="none" stroke="#000" stroke-width="1.8"/><rect x="6.5" y="7.5" width="2" height="2" fill="#fff"/></svg>
<svg style="left:396px;top:155px" width="15" height="15"><path d="M0 5 L5 0 H15 V10 L10 15 H0 Z" fill="#e4e4e4"/><path d="M1 6 L6 1 V9 L1 14 Z" fill="#cc0000"/><path d="M5.5 0.5 H14.5 V9.5 H5.5 Z" fill="none" stroke="#000" stroke-width="1"/><path d="M1 5 L5.5 0.5 M10 5 L14.5 0.5 M10 14 L14.5 9.5 M1 14 L5.5 9.5" stroke="#000" stroke-width="1"/><rect x="1" y="5.5" width="8.5" height="8" fill="none" stroke="#000" stroke-width="1.8"/><rect x="6.5" y="7.5" width="2" height="2" fill="#fff"/></svg>
<svg style="left:396px;top:171px" width="14" height="14"><rect x="0.75" y="0.75" width="12.5" height="12.5" fill="none" stroke="#000" stroke-width="1.5"/><rect x="3.5" y="3.5" width="7" height="7" fill="none" stroke="#000" stroke-width="1"/><path d="M1 1 L3.5 3.5 M13 1 L10.5 3.5 M1 13 L3.5 10.5 M13 13 L10.5 10.5" stroke="#000" stroke-width="0.8"/></svg>
<svg style="left:396px;top:186px" width="16" height="16"><path d="M5 2.5 H9 Q13 3 13.5 8" fill="none" stroke="#000" stroke-width="1.2"/><path d="M3 2.5 L6 0.5 V4.5 Z M11.5 8 H15.5 L13.5 11 Z" fill="#000"/><path d="M1 9 L4 6 H9 V11 L6 14 H1 Z" fill="#ddd" stroke="#000" stroke-width="1.4"/><path d="M2 9 H8 M5 7 V13" stroke="#000" stroke-width="0.8"/></svg>
<svg style="left:396px;top:203px" width="6" height="15"><path d="M1 1 V14 M1 1.5 H5 M1 5.5 H4 M1 9.5 H4 M1 13.5 H5" stroke="#000" stroke-width="1.4" fill="none"/></svg>
<svg style="left:396px;top:243px" width="14" height="14"><circle cx="5" cy="5" r="4" fill="#c8c8e8" stroke="#000" stroke-width="1.2"/><path d="M3 5 H7 M5 3 V7" stroke="#000" stroke-width="1"/><path d="M8 8 L12.5 12.5" stroke="#a05020" stroke-width="2.2"/></svg>
<svg style="left:396px;top:259px" width="14" height="14"><circle cx="5" cy="5" r="4" fill="#c8c8e8" stroke="#000" stroke-width="1.2"/><path d="M3 5 H7" stroke="#000" stroke-width="1"/><path d="M8 8 L12.5 12.5" stroke="#a05020" stroke-width="2.2"/></svg>
<svg style="left:396px;top:275px" width="14" height="13"><path d="M0.5 5.5 L3 3 V1.5 H5 L7 0.5 L13.5 5.5 Z" fill="#a8a8e0" stroke="#2a2a6a" stroke-width="1.1"/><rect x="2" y="5.5" width="10" height="5.5" fill="#a8a8e0" stroke="#2a2a6a" stroke-width="1.1"/><path d="M1 11.2 H13" stroke="#2a2a6a" stroke-width="1.3"/></svg>
<svg style="left:398px;top:292px" width="12" height="12"><path d="M8 1 L3 6 L8 11" fill="none" stroke="#2a2a6a" stroke-width="3.2" stroke-linejoin="miter"/><path d="M8 1 L3 6 L8 11" fill="none" stroke="#a0a0e0" stroke-width="1.4"/></svg>
<svg style="left:398px;top:308px" width="12" height="12"><path d="M3 1 L8 6 L3 11" fill="none" stroke="#2a2a6a" stroke-width="3.2" stroke-linejoin="miter"/><path d="M3 1 L8 6 L3 11" fill="none" stroke="#a0a0e0" stroke-width="1.4"/></svg>
<svg style="left:397px;top:324px" width="12" height="12"><path d="M1 8 L6 3 L11 8" fill="none" stroke="#2a2a6a" stroke-width="3.2" stroke-linejoin="miter"/><path d="M1 8 L6 3 L11 8" fill="none" stroke="#a0a0e0" stroke-width="1.4"/></svg>
<svg style="left:397px;top:340px" width="12" height="12"><path d="M1 3 L6 8 L11 3" fill="none" stroke="#2a2a6a" stroke-width="3.2" stroke-linejoin="miter"/><path d="M1 3 L6 8 L11 3" fill="none" stroke="#a0a0e0" stroke-width="1.4"/></svg>
<svg style="left:396px;top:366px" width="14" height="15"><path d="M4 4 A4.5 4.5 0 1 1 5 12" fill="none" stroke="#2a2a6a" stroke-width="2.6"/><path d="M4 4 A4.5 4.5 0 1 1 5 12" fill="none" stroke="#a0a0e0" stroke-width="1"/><path d="M1 2 L6 1.5 L5 6.5 Z" fill="#2a2a6a"/></svg>
<svg style="left:396px;top:383px" width="14" height="15"><path d="M10 4 A4.5 4.5 0 1 0 9 12" fill="none" stroke="#9a9a9a" stroke-width="2.6"/><path d="M13 2 L8 1.5 L9 6.5 Z" fill="#9a9a9a"/></svg>
<div class="lbl" style="left:36px;top:84px;letter-spacing:1.2px"><span class="u">V</span>iew</div>
<div class="lbl" style="left:79px;top:84px;letter-spacing:0.4px"><span class="u">P</span>rojections</div>
<div class="a" style="left:155px;top:73px;width:11px;height:7px;background:#00ee00;border:1px solid #888"></div>
<div class="a" style="left:168px;top:73px;width:11px;height:7px;background:#00ee00;border:1px solid #888"></div>
<div class="a" style="left:181px;top:73px;width:11px;height:7px;background:#00ee00;border:1px solid #888"></div>
<div class="a" style="left:194px;top:73px;width:11px;height:7px;background:#00ee00;border:1px solid #888"></div>
<div class="a" style="left:207px;top:73px;width:11px;height:7px;background:#00ee00;border:1px solid #888"></div>
<div class="a" style="left:220px;top:73px;width:11px;height:7px;background:#00ee00;border:1px solid #888"></div>
<div class="a" style="left:233px;top:73px;width:11px;height:7px;background:#00ee00;border:1px solid #888"></div>
<div class="a" style="left:153px;top:81px;width:105px;height:19px;border-top:1px solid #777;border-right:1px solid #777;border-bottom:1px solid #777;box-shadow:inset 0 1px 0 #fff,1px 1px 0 #fff"></div>
<div class="tm" style="left:154px;top:85px">27 18:00:00 MDT</div>
<svg style="left:242px;top:88px" width="11" height="6"><path d="M0 0 H10 L5 5.5 Z" fill="#000"/></svg>
<div class="eb" style="left:262px;top:82px"></div>
<svg style="left:262px;top:82px" width="17" height="17"><path d="M8 3 V14 L2.5 8.5 Z M14 3 V14 L8.5 8.5 Z" fill="#6c6cb4" stroke="#2a2a6a" stroke-width="0.9"/></svg>
<div class="eb" style="left:281px;top:82px"></div>
<svg style="left:281px;top:82px" width="17" height="17"><path d="M9 3 V14 L3.5 8.5 Z" fill="#6c6cb4" stroke="#2a2a6a" stroke-width="0.9"/><rect x="10.5" y="3.5" width="3" height="10" fill="#6c6cb4" stroke="#2a2a6a" stroke-width="0.9"/></svg>
<div class="eb" style="left:300px;top:82px"></div>
<svg style="left:300px;top:82px" width="17" height="17"><path d="M5.5 3 V14 L12 8.5 Z" fill="#6c6cb4" stroke="#2a2a6a" stroke-width="0.9"/></svg>
<div class="eb" style="left:319px;top:82px"></div>
<svg style="left:319px;top:82px" width="17" height="17"><rect x="3" y="3.5" width="3" height="10" fill="#6c6cb4" stroke="#2a2a6a" stroke-width="0.9"/><path d="M8 3 V14 L13.5 8.5 Z" fill="#6c6cb4" stroke="#2a2a6a" stroke-width="0.9"/></svg>
<div class="eb" style="left:338px;top:82px"></div>
<svg style="left:338px;top:82px" width="17" height="17"><path d="M3 3 V14 L8.5 8.5 Z M9 3 V14 L14.5 8.5 Z" fill="#6c6cb4" stroke="#2a2a6a" stroke-width="0.9"/></svg>
<div class="eb" style="left:357px;top:82px"></div>
<svg style="left:357px;top:82px" width="17" height="17"><circle cx="8.5" cy="8.5" r="6.2" fill="#c0c0e0" stroke="#000" stroke-width="1.2"/><path d="M7 12.5 H10.5 L9.5 11 V7 H7.8 V11 Z M8 4.5 H9.5 V6 H8 Z" fill="#f4f4ff" stroke="#555" stroke-width="0.6"/></svg>
<div class="lbl" style="left:421px;top:84px;letter-spacing:1.2px"><span class="u">V</span>iew</div>
<div class="lbl" style="left:464px;top:84px;letter-spacing:0.4px"><span class="u">P</span>rojections</div>
<div class="a" style="left:539px;top:81px;width:98px;height:19px;border-top:1px solid #777;border-right:1px solid #777;border-bottom:1px solid #777;box-shadow:inset 0 1px 0 #fff,1px 1px 0 #fff"></div>
<div class="tm" style="left:540px;top:85px">8 00:00:00 MDT</div>
<svg style="left:621px;top:88px" width="11" height="6"><path d="M0 0 H10 L5 5.5 Z" fill="#000"/></svg>
<div class="eb" style="left:641px;top:82px"></div>
<svg style="left:641px;top:82px" width="17" height="17"><path d="M8 3 V14 L2.5 8.5 Z M14 3 V14 L8.5 8.5 Z" fill="#6c6cb4" stroke="#2a2a6a" stroke-width="0.9"/></svg>
<div class="eb" style="left:660px;top:82px"></div>
<svg style="left:660px;top:82px" width="17" height="17"><path d="M9 3 V14 L3.5 8.5 Z" fill="#6c6cb4" stroke="#2a2a6a" stroke-width="0.9"/><rect x="10.5" y="3.5" width="3" height="10" fill="#6c6cb4" stroke="#2a2a6a" stroke-width="0.9"/></svg>
<div class="eb" style="left:679px;top:82px"></div>
<svg style="left:679px;top:82px" width="17" height="17"><path d="M5.5 3 V14 L12 8.5 Z" fill="#6c6cb4" stroke="#2a2a6a" stroke-width="0.9"/></svg>
<div class="eb" style="left:698px;top:82px"></div>
<svg style="left:698px;top:82px" width="17" height="17"><rect x="3" y="3.5" width="3" height="10" fill="#6c6cb4" stroke="#2a2a6a" stroke-width="0.9"/><path d="M8 3 V14 L13.5 8.5 Z" fill="#6c6cb4" stroke="#2a2a6a" stroke-width="0.9"/></svg>
<div class="eb" style="left:717px;top:82px"></div>
<svg style="left:717px;top:82px" width="17" height="17"><path d="M3 3 V14 L8.5 8.5 Z M9 3 V14 L14.5 8.5 Z" fill="#6c6cb4" stroke="#2a2a6a" stroke-width="0.9"/></svg>
<div class="eb" style="left:736px;top:82px"></div>
<svg style="left:736px;top:82px" width="17" height="17"><circle cx="8.5" cy="8.5" r="6.2" fill="#c0c0e0" stroke="#000" stroke-width="1.2"/><path d="M7 12.5 H10.5 L9.5 11 V7 H7.8 V11 Z M8 4.5 H9.5 V6 H8 Z" fill="#f4f4ff" stroke="#555" stroke-width="0.6"/></svg>
<div class="a" style="left:32px;top:103px;width:346px;height:429px;background:#000;border:1px solid #8a8a8a;border-right-color:#ddd;border-bottom-color:#ddd"></div>
<div class="a" style="left:415px;top:101px;width:344px;height:433px;border:2px solid #0000ff;background:#000;box-shadow:inset 0 0 0 1px #808080"></div>
<svg class="mapsvg" style="left:0;top:0" width="764" height="562"><defs><clipPath id="cl"><rect x="33" y="104" width="344" height="427"/></clipPath><clipPath id="cr"><rect x="418" y="104" width="337" height="427"/></clipPath></defs><g clip-path="url(#cl)" shape-rendering="crispEdges"><path d="M66.8 215.8 L71.3 218.0 L75.2 218.0 L78.0 222.0 L82.5 223.1 L83.7 225.3 L79.7 226.5 L76.4 228.7 L75.2 236.0 L73.0 242.8 L71.3 241.7 L71.3 233.8 L67.9 231.0 L66.2 226.5 L65.7 221.4Z" stroke="#0000ff" stroke-width="1" fill="#0000ff"/><path d="M63.4 222.5 L64.5 233.8 L64.0 247.3 L63.4 263.3" stroke="#0000ff" stroke-width="1" fill="none"/><path d="M63.4 229.3 L70.2 232.7 L72.4 236.0" stroke="#0000ff" stroke-width="1" fill="none"/><path d="M128.7 224.7 L128.7 232.0" stroke="#0000ff" stroke-width="1" fill="none"/><path d="M157.1 228.1 L157.1 232.0" stroke="#0000ff" stroke-width="1" fill="none"/><path d="M83.7 227.6 L90.0 229.1 L100.5 231.2 L119.3 234.4 L129.8 235.9" stroke="#0000ff" stroke-width="1" fill="none"/><path d="M63.4 232.0 L64.0 241.0 L65.7 246.6 L64.0 252.3 L63.4 257.9 L60.0 265.8 L57.2 272.5 L54.4 279.3 L53.8 288.3 L55.0 295.3" stroke="#0000ff" stroke-width="1" fill="none"/><path d="M65.7 252.3 L70.2 253.4 L71.3 257.9 L78.0 258.5 L89.3 259.0 L106.2 260.2 L110.7 263.5 L108.5 270.3 L105.1 274.8 L103.9 282.7 L102.8 295.3" stroke="#0000ff" stroke-width="1" fill="none"/><path d="M111.8 235.4 L110.7 245.5 L109.6 254.5 L107.3 260.2" stroke="#0000ff" stroke-width="1" fill="none"/><path d="M106.2 233.1 L119.0 234.3" stroke="#0000ff" stroke-width="1" fill="none"/><path d="M53.3 289.4 L61.2 290.6 L70.2 291.7 L82.5 293.9 L85.9 295.3" stroke="#0000ff" stroke-width="1" fill="none"/><path d="M71.9 236.5 L75.8 233.1 L79.2 234.3 L78.0 241.0 L74.7 244.4 L72.4 242.1 L71.9 236.5Z" stroke="#0000ff" stroke-width="1" fill="#0000ff"/><path d="M116.3 239.9 L117.5 248.9" stroke="#0000ff" stroke-width="1" fill="none"/><path d="M119.0 235.4 L130.3 236.5 L144.9 237.6 L158.4 239.3 L173.1 241.0 L186.6 242.1 L195.6 242.7 L205.0 243.3" stroke="#0000ff" stroke-width="1" fill="none"/><path d="M156.2 232.0 L156.2 237.1" stroke="#0000ff" stroke-width="1" fill="none"/><path d="M193.3 242.7 L192.2 263.5 L191.1 279.3 L189.4 295.3" stroke="#0000ff" stroke-width="1" fill="none"/><path d="M119.0 250.0 L122.4 254.5 L125.2 257.9 L124.1 265.8 L126.9 268.0 L129.1 273.7 L132.0 280.4" stroke="#0000ff" stroke-width="1" fill="none"/><path d="M132.0 279.9 L141.5 279.3 L146.0 275.9 L156.2 277.0 L175.3 279.3 L189.9 279.9" stroke="#0000ff" stroke-width="1" fill="none"/><path d="M192.2 271.4 L205.0 272.3" stroke="#0000ff" stroke-width="1" fill="none"/><path d="M146.0 275.9 L143.8 295.3" stroke="#0000ff" stroke-width="1" fill="none"/><path d="M119.0 300.1 L124.6 300.6 L141.5 302.9 L141.0 311.9 L155.0 314.1 L167.4 315.3 L188.8 315.8 L202.3 317.5" stroke="#0000ff" stroke-width="1" fill="none"/><path d="M121.3 300.6 L120.1 311.9 L119.0 322.0" stroke="#0000ff" stroke-width="1" fill="none"/><path d="M142.6 295.0 L142.1 302.9" stroke="#0000ff" stroke-width="1" fill="none"/><path d="M189.4 295.0 L188.3 315.8" stroke="#0000ff" stroke-width="1" fill="none"/><path d="M189.9 298.4 L205.0 299.5" stroke="#0000ff" stroke-width="1" fill="none"/><path d="M155.0 314.1 L152.8 328.8 L150.5 349.1 L150.0 358.3" stroke="#0000ff" stroke-width="1" fill="none"/><path d="M119.0 346.2 L135.9 347.9 L150.5 349.1 L164.0 350.7 L178.7 352.4 L192.2 353.6 L205.0 353.6" stroke="#0000ff" stroke-width="1" fill="none"/><path d="M202.3 317.5 L200.1 352.4" stroke="#0000ff" stroke-width="1" fill="none"/><path d="M202.3 326.5 L205.0 326.5" stroke="#0000ff" stroke-width="1" fill="none"/><path d="M127.4 303.4 L131.4 306.3 L134.8 309.6 L135.3 311.9 L131.4 314.1 L128.6 308.5 L127.4 303.4" stroke="#0000ff" stroke-width="1" fill="none"/><path d="M291.0 244.4 L295.5 243.3 L303.4 244.4 L307.9 250.0 L313.5 253.4 L316.9 259.0 L318.0 264.7 L321.4 268.0 L330.4 268.0 L339.4 268.0 L343.9 270.3 L347.3 274.8 L349.6 278.2 L347.3 281.5" stroke="#0000ff" stroke-width="1" fill="none"/><path d="M291.0 260.2 L295.5 257.9" stroke="#0000ff" stroke-width="1" fill="none"/><path d="M298.9 265.8 L307.9 263.5 L313.5 264.7 L315.8 268.0 L313.5 270.3 L307.9 271.4 L302.3 273.7 L297.8 280.4 L296.6 288.3" stroke="#0000ff" stroke-width="1" fill="none"/><path d="M346.2 232.0 L347.3 238.8 L348.4 252.3 L351.8 259.0 L356.3 262.4 L364.2 264.7 L369.8 268.0 L377.0 269.2" stroke="#0000ff" stroke-width="1" fill="none"/><path d="M307.9 270.3 L313.5 269.2 L321.4 270.3 L327.0 277.0 L327.0 286.1 L324.8 290.6 L328.2 292.8 L338.3 292.8 L339.4 284.9 L340.5 280.4" stroke="#0000ff" stroke-width="1" fill="none"/><path d="M351.8 290.6 L358.6 287.2 L367.6 284.9 L374.3 281.5 L377.0 279.3" stroke="#0000ff" stroke-width="1" fill="none"/><path d="M354.1 292.8 L360.8 290.6 L369.8 289.4 L377.0 286.1" stroke="#0000ff" stroke-width="1" fill="none"/><path d="M352.4 279.3 L354.1 279.3 L354.6 282.7 L352.4 282.7Z" stroke="#0000ff" stroke-width="1" fill="#0000ff"/><path d="M293.3 233.1 L292.1 238.8" stroke="#0000ff" stroke-width="2" fill="none"/><path d="M294.4 269.2 L297.8 272.5 L300.0 277.0 L301.1 282.7 L303.4 288.3 L305.6 295.3" stroke="#0000ff" stroke-width="1" fill="none"/><path d="M307.9 277.0 L309.0 283.8 L306.8 290.6 L306.8 295.3" stroke="#0000ff" stroke-width="1" fill="none"/><path d="M291.0 245.0 L297.8 246.6 L304.5 245.5" stroke="#0000ff" stroke-width="2" fill="none"/><path d="M316.9 265.8 L322.5 269.2 L333.8 270.3 L340.5 273.7 L343.9 278.2" stroke="#0000ff" stroke-width="2" fill="none"/><path d="M291.0 304.0 L301.1 304.6 L307.9 304.0 L309.0 295.0" stroke="#0000ff" stroke-width="1" fill="none"/><path d="M297.8 295.0 L298.9 301.8 L301.1 308.5" stroke="#0000ff" stroke-width="1" fill="none"/><path d="M301.1 310.8 L311.3 309.4 L327.0 309.1 L333.8 309.6 L336.0 309.6" stroke="#0000ff" stroke-width="1" fill="none"/><path d="M301.7 310.8 L301.7 328.8 L302.3 335.5 L300.0 342.3 L296.6 347.9 L293.3 352.4 L291.0 354.7" stroke="#0000ff" stroke-width="1" fill="none"/><path d="M319.7 309.6 L320.8 331.0 L323.7 333.3 L330.4 336.1 L336.0 336.7 L339.4 333.3 L345.1 328.8 L348.4 325.4 L349.6 317.5 L348.4 305.1" stroke="#0000ff" stroke-width="1" fill="none"/><path d="M321.4 333.3 L316.9 337.8 L313.5 342.3 L305.6 344.5 L300.0 346.8" stroke="#0000ff" stroke-width="1" fill="none"/><path d="M336.0 337.2 L338.3 342.3 L341.7 346.8 L336.0 351.3 L332.7 354.7 L324.8 358.3" stroke="#0000ff" stroke-width="1" fill="none"/><path d="M341.7 346.8 L351.8 344.5 L356.3 340.0 L360.8 332.2 L365.3 324.3" stroke="#0000ff" stroke-width="1" fill="none"/><path d="M349.6 324.8 L358.6 324.8 L365.3 323.2 L369.8 326.5 L374.3 328.8 L377.0 333.3" stroke="#0000ff" stroke-width="1" fill="none"/><path d="M328.2 308.5 L333.8 301.8 L336.0 295.0" stroke="#0000ff" stroke-width="1" fill="none"/><path d="M329.3 308.5 L338.3 304.0 L347.3 299.5 L356.3 296.1 L358.6 295.0" stroke="#0000ff" stroke-width="1" fill="none"/><path d="M338.3 309.6 L347.3 305.1 L354.1 300.6 L358.6 297.3" stroke="#0000ff" stroke-width="1" fill="none"/><path d="M352.9 302.9 L364.2 301.8 L377.0 300.1" stroke="#0000ff" stroke-width="1" fill="none"/><path d="M291.0 355.8 L313.5 354.7 L336.0 354.1 L358.6 351.3 L377.0 350.2" stroke="#0000ff" stroke-width="1" fill="none"/><path d="M365.3 324.3 L369.8 328.8 L374.3 332.2" stroke="#0000ff" stroke-width="1" fill="none"/><path d="M210.1 233.1 L210.1 242.7" stroke="#0000ff" stroke-width="1" fill="none"/><path d="M205.0 243.3 L208.4 243.3" stroke="#0000ff" stroke-width="1" fill="none"/><path d="M221.9 244.4 L236.5 244.4 L247.8 244.4" stroke="#0000ff" stroke-width="1" fill="none"/><path d="M236.5 244.4 L237.1 254.5 L238.8 263.5 L239.9 271.4 L238.8 277.0 L241.0 280.4 L241.0 295.3" stroke="#0000ff" stroke-width="1" fill="none"/><path d="M205.0 272.3 L223.0 272.5 L233.2 273.7 L239.9 273.1" stroke="#0000ff" stroke-width="1" fill="none"/><path d="M249.5 234.3 L250.0 238.8 L248.9 244.4 L252.3 246.6 L261.3 247.8 L272.6 252.3 L283.8 252.3 L291.0 250.0" stroke="#0000ff" stroke-width="1" fill="none"/><path d="M268.1 268.0 L266.4 274.8 L264.7 281.5 L268.1 286.1 L272.6 289.4 L275.9 295.3" stroke="#0000ff" stroke-width="1" fill="none"/><path d="M268.1 265.8 L277.1 257.9 L283.8 253.4" stroke="#0000ff" stroke-width="1" fill="none"/><path d="M274.8 265.8 L281.6 262.4 L291.0 257.9" stroke="#0000ff" stroke-width="1" fill="none"/><path d="M277.1 268.0 L283.8 268.0 L291.0 271.4" stroke="#0000ff" stroke-width="1" fill="none"/><path d="M248.4 251.7 L252.9 251.1 L253.4 254.5 L248.9 255.6Z" stroke="#0000ff" stroke-width="1" fill="#0000ff"/><path d="M252.9 259.0 L256.2 258.5 L255.7 261.8 L252.3 262.4Z" stroke="#0000ff" stroke-width="1" fill="#0000ff"/><path d="M257.4 269.2 L260.7 270.3 L259.1 271.6Z" stroke="#0000ff" stroke-width="1" fill="#0000ff"/><path d="M250.0 237.6 L254.5 239.9 L256.8 243.3 L252.3 244.4 L249.5 242.1Z" stroke="#0000ff" stroke-width="1" fill="#0000ff"/><path d="M287.8 234.8 L291.0 235.4 L291.0 238.8 L288.3 238.2Z" stroke="#0000ff" stroke-width="1" fill="#0000ff"/><path d="M205.0 299.5 L215.1 300.1 L227.5 300.6 L229.8 302.3 L236.5 302.3" stroke="#0000ff" stroke-width="1" fill="none"/><path d="M238.8 295.0 L274.8 295.0" stroke="#0000ff" stroke-width="1" fill="none"/><path d="M239.3 295.0 L238.8 301.8 L242.2 306.3 L244.4 317.5 L245.5 324.3 L248.9 328.8 L252.3 333.3 L253.4 340.0 L253.4 358.3" stroke="#0000ff" stroke-width="2" fill="none"/><path d="M205.0 326.5 L210.6 327.1 L234.3 327.7 L247.2 327.1" stroke="#0000ff" stroke-width="1" fill="none"/><path d="M244.4 322.0 L273.7 322.6" stroke="#0000ff" stroke-width="1" fill="none"/><path d="M274.8 295.0 L277.1 301.8 L282.7 306.3 L283.8 309.6 L278.2 316.4 L274.8 324.3 L277.1 332.2 L283.8 338.9 L286.1 345.7 L290.6 349.1" stroke="#0000ff" stroke-width="2" fill="none"/><path d="M278.2 304.0 L291.0 304.0" stroke="#0000ff" stroke-width="1" fill="none"/><path d="M205.0 353.6 L227.5 354.1 L253.4 354.1" stroke="#0000ff" stroke-width="1" fill="none"/><path d="M287.2 298.4 L288.3 299.5" stroke="#0000ff" stroke-width="3" fill="none"/><path d="M53.3 295.0 L49.9 301.8 L51.6 311.9 L55.0 324.3 L58.9 328.8 L60.0 340.0 L62.8 349.1 L65.7 358.3" stroke="#0000ff" stroke-width="1" fill="none"/><path d="M81.4 295.0 L79.2 309.6 L77.5 318.6 L82.5 328.8 L96.1 342.3 L105.1 355.8" stroke="#0000ff" stroke-width="1" fill="none"/><path d="M87.1 295.0 L102.8 296.1 L119.0 300.1" stroke="#0000ff" stroke-width="1" fill="none"/><path d="M119.0 320.9 L116.3 346.8 L111.8 351.3" stroke="#0000ff" stroke-width="1" fill="none"/><path d="M65.7 358.0 L67.9 361.4 L73.5 364.8 L79.2 368.1 L82.5 371.5 L85.9 374.9 L88.2 381.6 L90.4 389.5 L93.8 399.7 L98.3 408.7 L102.8 416.6 L105.1 421.3" stroke="#0000ff" stroke-width="1" fill="none"/><path d="M88.2 380.5 L100.6 381.6 L105.1 382.2 L119.0 390.7" stroke="#0000ff" stroke-width="1" fill="none"/><path d="M103.9 383.9 L102.8 387.3 L105.1 391.8 L114.1 396.3 L116.3 400.8 L111.8 403.0 L105.1 400.8 L102.8 405.3 L107.3 412.1 L111.8 414.3 L115.2 418.8 L119.0 421.3" stroke="#0000ff" stroke-width="1" fill="none"/><path d="M107.3 358.0 L109.6 362.5 L110.7 369.3 L107.3 374.9 L106.2 380.5" stroke="#0000ff" stroke-width="1" fill="none"/><path d="M78.0 374.9 L78.0 376.0" stroke="#0000ff" stroke-width="3" fill="none"/><path d="M73.0 408.7 L73.0 410.0" stroke="#0000ff" stroke-width="3" fill="none"/><path d="M79.2 371.0 L80.3 372.1" stroke="#0000ff" stroke-width="3" fill="none"/><path d="M97.2 373.2 L98.9 374.9" stroke="#0000ff" stroke-width="3" fill="none"/><path d="M108.2 358.0 L108.2 369.4 L101.3 375.1 L103.6 385.3" stroke="#0000ff" stroke-width="1" fill="none"/><path d="M103.6 385.3 L124.1 394.4 L144.6 399.0 L169.7 396.7 L190.2 396.7 L190.2 358.0" stroke="#0000ff" stroke-width="1" fill="none"/><path d="M146.9 358.0 L146.9 399.0" stroke="#0000ff" stroke-width="1" fill="none"/><path d="M169.7 396.7 L173.1 408.1 L181.1 417.2 L183.3 433.2 L178.8 444.6 L183.3 453.7 L192.5 458.2 L205.0 455.9" stroke="#0000ff" stroke-width="1" fill="none"/><path d="M108.2 396.7 L115.0 401.3 L119.6 417.2 L126.4 430.9 L130.9 444.6 L130.9 458.2 L134.4 469.6 L130.9 471.9" stroke="#0000ff" stroke-width="1" fill="none"/><path d="M144.6 426.3 L142.3 440.0 L153.7 444.6 L160.6 442.3 L167.4 444.6" stroke="#0000ff" stroke-width="1" fill="none"/><path d="M205.0 414.9 L192.5 421.8 L181.1 430.9" stroke="#0000ff" stroke-width="1" fill="none"/><path d="M144.6 399.0 L142.3 414.9 L144.6 426.3 L146.9 440.0 L156.0 453.7 L160.6 467.3 L165.1 481.0 L167.4 486.0" stroke="#0000ff" stroke-width="1" fill="none"/><path d="M105.0 421.3 L110.4 433.2 L115.0 446.8 L119.6 453.7 L128.7 458.2 L133.2 469.6 L130.9 471.9" stroke="#0000ff" stroke-width="1" fill="none"/><path d="M72.9 408.6 L72.9 410.8" stroke="#0000ff" stroke-width="3" fill="none"/><path d="M94.5 419.5 L99.1 424.1 L103.6 426.3" stroke="#0000ff" stroke-width="1" fill="none"/><path d="M214.1 360.0 L215.3 375.9 L227.8 380.5 L239.2 381.6 L248.3 380.5 L257.4 382.8 L257.4 389.6 L277.9 389.6 L280.2 398.7 L277.9 405.6" stroke="#0000ff" stroke-width="1" fill="none"/><path d="M257.4 382.8 L257.4 396.4" stroke="#0000ff" stroke-width="1" fill="none"/><path d="M277.9 389.6 L284.7 360.0" stroke="#0000ff" stroke-width="1" fill="none"/><path d="M280.2 371.4 L300.7 370.9 L318.9 370.3 L328.0 366.8 L334.8 363.4 L344.0 360.0" stroke="#0000ff" stroke-width="1" fill="none"/><path d="M334.8 363.4 L362.2 366.8 L373.6 371.4" stroke="#0000ff" stroke-width="1" fill="none"/><path d="M300.7 370.9 L298.4 403.3 L305.2 409.0" stroke="#0000ff" stroke-width="1" fill="none"/><path d="M318.9 370.3 L323.5 394.2 L324.6 404.4 L350.8 405.6" stroke="#0000ff" stroke-width="1" fill="none"/><path d="M334.8 368.0 L344.0 378.2 L351.9 391.9 L350.8 405.6" stroke="#0000ff" stroke-width="1" fill="none"/><path d="M362.2 366.8 L369.0 373.7 L377.0 375.9" stroke="#0000ff" stroke-width="1" fill="none"/><path d="M257.4 403.3 L259.7 410.1 L257.4 416.9 L250.6 420.4 L241.4 428.3 L232.3 435.2 L228.9 446.6 L227.8 460.2 L226.6 473.9 L227.8 488.0" stroke="#0000ff" stroke-width="1" fill="none"/><path d="M259.7 415.8 L273.3 418.1 L284.7 421.5 L291.6 422.6 L296.1 421.5 L291.6 414.7 L300.7 410.1 L312.1 409.0 L325.7 414.7 L337.1 416.9 L341.7 420.4 L344.0 430.6 L350.8 439.7 L355.3 446.6 L364.5 451.1 L362.2 455.7 L353.1 457.9" stroke="#0000ff" stroke-width="1" fill="none"/><path d="M350.8 405.6 L355.3 414.7 L362.2 428.3 L364.5 439.7 L364.5 448.8" stroke="#0000ff" stroke-width="1" fill="none"/><path d="M205.0 419.2 L210.7 428.3 L208.4 437.4 L214.1 444.3 L223.2 455.7 L216.4 460.2 L214.1 467.1" stroke="#0000ff" stroke-width="1" fill="none"/><path d="M336.0 483.0 L346.2 476.2 L359.9 472.8 L369.0 471.6 L377.0 473.9" stroke="#0000ff" stroke-width="1" fill="none"/><path d="M341.7 484.1 L353.1 480.7 L364.5 478.5" stroke="#0000ff" stroke-width="1" fill="none"/><path d="M284.7 413.5 L291.6 412.4 L296.1 415.8" stroke="#0000ff" stroke-width="1" fill="none"/><path d="M108.2 434.0 L115.0 443.1 L119.6 452.2 L126.4 459.1 L133.2 465.9 L130.9 471.6" stroke="#0000ff" stroke-width="1" fill="none"/><path d="M117.3 434.0 L121.8 443.1 L128.7 452.2 L133.2 461.3 L134.4 468.2" stroke="#0000ff" stroke-width="1" fill="none"/><path d="M130.9 434.0 L137.8 443.1 L146.9 454.5 L156.0 463.6 L162.8 472.7 L167.4 481.8 L165.1 490.9 L164.0 497.8" stroke="#0000ff" stroke-width="1" fill="none"/><path d="M142.3 434.0 L146.9 443.1 L156.0 452.2 L165.1 443.1 L178.8 440.8 L183.3 449.9 L178.8 456.8 L192.5 459.1 L205.0 456.8" stroke="#0000ff" stroke-width="1" fill="none"/><path d="M232.3 434.0 L228.9 447.7 L227.8 461.3 L227.8 479.6 L231.2 488.7 L233.5 497.8 L239.2 506.9" stroke="#0000ff" stroke-width="1" fill="none"/><path d="M288.1 493.2 L296.1 489.8 L305.2 488.7 L315.5 487.5 L316.6 493.2 L314.3 500.1 L309.8 504.6" stroke="#0000ff" stroke-width="1" fill="none"/><path d="M331.4 484.1 L341.7 477.3 L355.3 470.4 L369.0 470.0 L377.0 471.6" stroke="#0000ff" stroke-width="1" fill="none"/><path d="M334.8 483.0 L346.2 479.6 L359.9 478.4 L369.0 480.7" stroke="#0000ff" stroke-width="1" fill="none"/><path d="M346.2 485.3 L355.3 483.0" stroke="#0000ff" stroke-width="1" fill="none"/><path d="M346.2 434.0 L350.8 443.1 L359.9 452.2 L364.5 447.7 L366.7 434.0" stroke="#0000ff" stroke-width="1" fill="none"/><path d="M353.1 457.9 L362.2 455.6 L365.6 449.9" stroke="#0000ff" stroke-width="1" fill="none"/><path d="M133.2 109.0 L136.6 113.1 L141.2 114.3 L146.9 112.0 L151.5 109.7 L156.0 108.1 L160.6 105.1 L161.7 104.0" stroke="#00cc00" stroke-width="1" fill="none"/><path d="M160.6 140.4 L169.7 132.5 L181.1 137.0 L169.7 138.2 L162.8 141.6" stroke="#00cc00" stroke-width="1" fill="none"/><path d="M33.0 126.8 L35.3 129.1 L36.4 135.9 L35.3 142.7 L37.6 149.6 L42.1 158.7 L46.7 163.2 L44.4 167.8 L41.0 172.3 L43.3 179.2 L46.7 190.6 L50.1 197.4 L51.2 204.2 L46.7 204.2 L48.9 208.8 L55.8 211.1 L60.3 215.6 L62.6 220.2 L64.9 227.0" stroke="#00cc00" stroke-width="1" fill="none"/><path d="M33.0 167.8 L35.3 175.8 L33.0 183.7" stroke="#00cc00" stroke-width="1" fill="none"/><path d="M263.8 104.0 L261.9 109.7 L256.9 115.4 L253.3 122.2 L252.4 131.3 L251.7 140.4 L252.8 146.1 L257.8 145.5 L260.8 149.6 L263.1 156.4 L265.4 165.0 L273.3 162.1 L280.2 164.4 L284.7 167.8 L291.6 172.3 L296.1 176.4 L300.7 181.0 L307.5 179.2 L314.3 179.2 L321.2 178.0 L328.0 174.6 L334.8 170.1 L339.4 167.8 L341.2 160.9 L341.7 149.6 L340.5 142.7 L337.1 135.9 L332.6 131.3 L325.7 126.8 L324.6 119.9 L328.0 118.8" stroke="#00cc00" stroke-width="1" fill="none"/><path d="M305.2 118.8 L300.7 125.6 L295.0 135.9 L300.7 143.9 L299.5 151.8 L289.3 155.3 L283.6 151.8 L275.6 149.6 L275.6 155.3 L282.4 157.5 L287.0 163.2 L292.7 170.1 L297.3 176.9 L300.7 183.7" stroke="#00cc00" stroke-width="1" fill="none"/><path d="M329.1 104.0 L331.4 110.8 L339.4 106.3 L342.8 113.1 L341.7 119.9 L345.1 129.1 L348.5 135.9 L341.7 140.4 L349.6 149.6 L351.9 163.2 L353.1 172.3 L344.0 183.7 L341.7 188.3 L342.8 199.7 L346.2 206.5 L345.1 213.3 L341.7 217.9" stroke="#00cc00" stroke-width="1" fill="none"/><path d="M205.0 167.8 L211.8 153.0 L214.1 157.5 L208.4 163.2 L205.0 170.1" stroke="#00cc00" stroke-width="1" fill="none"/><path d="M214.1 204.2 L220.9 201.9 L225.5 197.4 L232.3 197.4 L239.2 220.2 L241.4 229.3 L234.6 232.0" stroke="#00cc00" stroke-width="1" fill="none"/><path d="M214.1 204.2 L218.7 213.3 L223.2 215.6 L225.5 222.5 L230.1 229.3 L231.2 232.0" stroke="#00cc00" stroke-width="1" fill="none"/><path d="M224.4 201.9 L227.8 211.1 L234.6 217.9 L239.2 222.5" stroke="#00cc00" stroke-width="1" fill="none"/><path d="M164.0 497.8 L169.7 504.6 L178.8 511.4 L190.2 518.3 L201.6 525.1 L205.0 527.4" stroke="#00cc00" stroke-width="1" fill="none"/><path d="M239.2 506.9 L246.0 516.0 L255.1 519.4 L264.2 518.3 L280.2 512.6 L287.0 502.3 L288.1 493.2" stroke="#00cc00" stroke-width="1" fill="none"/><path d="M309.8 504.6 L308.6 516.0 L306.4 531.0" stroke="#00cc00" stroke-width="1" fill="none"/><path d="M205.0 528.5 L209.6 529.7" stroke="#00cc00" stroke-width="1" fill="none"/><path d="M123.0 124.5 L128.7 121.1 L130.9 127.9 L123.0 124.5" stroke="#f0f000" stroke-width="1" fill="none"/><path d="M44.4 118.8 L43.3 122.2 L44.4 138.2 L47.8 158.7 L48.9 172.3 L50.1 190.6 L51.2 206.5 L53.5 222.5 L55.8 232.0" stroke="#f0f000" stroke-width="1" fill="none"/><path d="M87.7 117.7 L84.3 122.2 L80.8 138.2 L75.1 160.9 L72.9 172.3 L67.2 186.0 L62.6 195.1 L61.5 204.2 L62.6 211.1 L67.2 217.9 L72.9 224.7 L76.3 232.0" stroke="#f0f000" stroke-width="1" fill="none"/><path d="M93.4 118.1 L99.1 122.2 L104.8 122.7 L108.2 131.3 L111.6 142.7 L119.6 149.6 L128.7 156.4 L140.1 163.2 L151.5 172.3 L162.8 181.4 L174.2 192.8 L187.9 201.9 L199.3 206.5 L205.0 207.0" stroke="#ffc000" stroke-width="1" fill="none"/><path d="M182.2 118.1 L181.1 124.5 L172.0 126.8 L162.8 133.6 L160.6 138.2 L165.1 143.9 L174.2 147.3 L181.1 154.1 L183.3 163.2 L183.3 179.2 L187.9 190.6 L197.0 196.3 L205.0 197.4" stroke="#f0f000" stroke-width="1" fill="none"/><path d="M86.5 232.0 L85.4 224.7 L80.8 217.9 L74.0 213.3 L70.6 206.5 L71.7 199.7 L72.9 195.1 L80.8 190.6 L92.2 184.9 L101.3 179.2 L110.4 170.1 L117.3 167.8 L124.1 170.1 L135.5 176.9 L151.5 188.3 L167.4 199.7 L181.1 211.1 L192.5 215.6 L205.0 217.9" stroke="#ff9a00" stroke-width="1" fill="none"/><path d="M92.2 232.0 L94.5 222.5 L108.2 217.9 L121.8 213.3 L135.5 217.9 L151.5 222.5 L169.7 229.3 L174.2 232.0" stroke="#ff9a00" stroke-width="1" fill="none"/><path d="M205.0 197.4 L218.7 195.1 L234.6 196.3 L246.0 199.7 L263.1 199.7" stroke="#f0f000" stroke-width="1" fill="none"/><path d="M275.6 197.4 L287.0 199.7 L300.7 201.9 L314.3 197.4 L328.0 199.7 L339.4 207.6 L348.5 207.6 L354.2 199.7 L355.3 183.7 L351.9 176.9 L355.3 163.2 L359.9 149.6 L358.8 126.8 L355.3 119.5" stroke="#f0f000" stroke-width="1" fill="none"/><path d="M205.0 205.4 L218.7 203.1 L232.3 206.5 L250.6 209.9 L268.8 206.5 L282.4 204.2 L296.1 208.8 L309.8 211.1 L323.5 208.8 L334.8 213.3 L344.0 217.9 L355.3 213.3 L357.6 201.9 L353.1 190.6 L357.6 176.9 L362.2 156.4 L364.5 147.3 L373.6 129.1 L377.0 125.6" stroke="#ffc000" stroke-width="1" fill="none"/><path d="M205.0 215.6 L218.7 217.9 L232.3 222.5 L246.0 221.3 L261.9 219.0 L275.6 215.6 L289.3 217.9 L293.8 221.3" stroke="#ff9a00" stroke-width="1" fill="none"/><path d="M307.5 224.7 L332.6 227.0 L350.8 228.1 L359.9 232.0" stroke="#ff9a00" stroke-width="1" fill="none"/><path d="M377.0 188.3 L374.7 192.8 L373.6 206.5 L375.8 222.5 L377.0 227.0" stroke="#ff9a00" stroke-width="1" fill="none"/><path d="M230.1 174.6 L239.2 168.9 L250.6 163.7 L256.9 155.3 L257.4 143.9 L256.9 126.8 L261.5 118.1" stroke="#a8f000" stroke-width="1" fill="none"/><path d="M230.1 174.6 L243.7 176.4 L261.9 183.7 L273.3 180.3 L284.7 182.6 L296.1 189.4 L305.2 191.7 L318.9 189.4 L332.6 183.7 L342.8 176.9 L347.4 165.5 L349.6 145.0 L348.5 119.5" stroke="#a8f000" stroke-width="1" fill="none"/><path d="M328.0 199.7 L336.0 204.2 L341.7 208.8 L346.2 211.1 L344.0 215.6 L341.7 217.9" stroke="#a8f000" stroke-width="1" fill="none"/><text x="264" y="202" font-size="9" fill="#f0f000" font-family="Liberation Mono" transform="rotate(-8 268 198)">15</text><text x="295" y="228" font-size="9" fill="#ff9a00" font-family="Liberation Mono">25</text><path d="M57.2 232.0 L60.0 238.8 L61.7 246.6 L60.0 254.5 L56.6 261.3 L51.6 265.8" stroke="#f0f000" stroke-width="1" fill="none"/><path d="M43.7 265.8 L40.9 259.0 L37.5 254.5 L33.0 252.3" stroke="#f0f000" stroke-width="1" fill="none"/><path d="M33.0 289.4 L40.3 280.4 L43.7 283.8 L45.4 290.6 L46.0 295.3" stroke="#f0f000" stroke-width="1" fill="none"/><path d="M75.8 232.0 L74.1 238.8 L71.3 248.9 L69.0 256.8 L63.4 264.7 L58.9 271.4 L55.0 279.3 L53.8 286.1 L52.7 295.3" stroke="#f0f000" stroke-width="1" fill="none"/><path d="M84.8 232.0 L81.4 241.0 L78.0 251.1 L73.5 259.0 L66.8 266.9 L61.2 274.8 L57.2 282.7 L56.1 290.6 L55.5 295.3" stroke="#ffc000" stroke-width="1" fill="none"/><path d="M91.0 232.0 L87.1 241.0 L83.7 250.0 L81.4 257.9 L73.5 265.8 L66.8 273.7 L62.3 281.5 L60.0 289.4 L58.9 295.3" stroke="#ff9a00" stroke-width="1" fill="none"/><path d="M105.1 232.0 L97.2 236.5 L92.7 242.1 L91.0 251.1 L88.7 261.3 L81.4 265.8 L73.5 272.5 L67.9 280.4 L64.5 288.3 L63.4 295.3" stroke="#ff6a00" stroke-width="1" fill="none"/><path d="M119.0 279.3 L114.1 278.2 L110.7 275.4 L105.1 274.2 L96.1 274.8 L85.9 277.0 L79.2 282.7 L75.8 289.4 L73.5 295.3" stroke="#ff4a10" stroke-width="1" fill="none"/><text x="42" y="274" font-size="9" fill="#f0f000" font-family="Liberation Mono">15</text><path d="M119.0 234.8 L125.8 234.0 L149.4 234.3 L156.2 236.5 L164.0 240.4 L171.9 244.4 L179.8 247.8 L186.6 250.0 L197.8 250.6 L205.0 251.7" stroke="#ff6a00" stroke-width="1" fill="none"/><path d="M175.3 232.0 L179.8 235.4 L185.4 239.9 L192.2 241.6 L200.1 242.4 L205.0 242.7" stroke="#ff9a00" stroke-width="1" fill="none"/><path d="M119.0 279.3 L124.6 278.2 L130.3 274.8 L135.9 269.2 L141.5 270.3 L142.6 277.0 L141.0 283.8 L142.6 290.6 L148.3 291.1 L152.8 286.1 L153.3 281.5 L150.5 272.5 L148.8 270.3 L152.8 266.9 L157.3 261.3 L159.5 256.8 L168.5 256.2 L180.9 259.0 L192.2 261.8 L199.5 264.7 L199.0 274.8 L197.3 282.7 L199.0 289.4 L205.0 293.4" stroke="#ff4a10" stroke-width="1" fill="none"/><path d="M151.7 358.3 L153.9 337.8 L158.4 328.8 L167.4 324.3 L173.1 323.2 L178.7 326.0 L186.6 331.0 L193.3 330.5 L202.3 317.5 L205.0 311.9" stroke="#ff6a00" stroke-width="1" fill="none"/><path d="M163.5 358.3 L165.2 345.7 L168.5 340.0 L174.2 339.5 L180.9 343.4 L188.8 351.3 L193.3 355.8" stroke="#ff9a00" stroke-width="1" fill="none"/><path d="M119.0 347.9 L123.5 349.1 L129.1 353.6 L133.6 358.3" stroke="#ff4a10" stroke-width="1" fill="none"/><path d="M205.0 242.3 L218.7 242.9 L234.6 242.3 L248.3 237.7 L251.7 236.1 L258.5 238.8 L261.9 245.7 L266.5 259.3 L271.1 268.4 L280.2 278.7 L273.3 286.7 L264.2 294.6 L261.9 300.3 L263.1 311.7 L259.7 312.9 L250.6 314.0 L239.2 318.6 L230.1 327.7 L227.8 339.1 L232.3 348.2 L246.0 350.5 L255.1 352.7 L257.4 360.0" stroke="#ff9a00" stroke-width="1" fill="none"/><path d="M205.0 252.5 L218.7 254.8 L232.3 258.2 L236.9 263.9 L234.6 275.3 L233.5 286.7 L235.8 300.3 L230.1 307.2 L223.2 314.0 L216.4 323.1 L209.6 334.5 L205.0 345.9" stroke="#ff6a00" stroke-width="1" fill="none"/><path d="M205.0 298.1 L211.8 296.9 L214.1 302.6 L205.0 311.7" stroke="#ff4a10" stroke-width="1" fill="none"/><path d="M291.6 236.6 L302.9 235.4 L323.5 238.8 L341.7 238.8 L355.3 235.4 L362.2 232.0" stroke="#ffc000" stroke-width="1" fill="none"/><path d="M291.6 236.6 L287.0 243.4 L285.9 252.5 L291.6 259.3 L298.4 266.2 L300.7 279.8 L297.3 288.9 L298.4 300.3 L302.9 309.4 L308.6 302.6 L309.8 291.2 L316.6 285.5 L321.2 284.8 L330.3 291.2 L337.1 293.5 L350.8 288.9 L357.6 291.2 L359.9 298.1 L366.7 298.1 L373.6 293.5 L373.6 285.5 L364.5 284.4 L359.9 277.6 L362.2 266.2 L369.0 261.6 L377.0 261.6" stroke="#ffc000" stroke-width="1" fill="none"/><path d="M271.1 360.0 L277.9 352.7 L284.7 351.6 L287.0 356.1" stroke="#ffc000" stroke-width="1" fill="none"/><path d="M302.9 360.0 L312.1 352.7 L325.7 351.6 L337.1 355.0 L346.2 357.3 L359.9 350.5 L364.5 341.3 L362.2 323.1 L364.5 319.7 L377.0 317.4" stroke="#ffc000" stroke-width="1" fill="none"/><ellipse cx="336.7" cy="274.8" rx="6.8" ry="6.2" stroke="#ffc000" fill="none"/><ellipse cx="332.1" cy="318.6" rx="8.4" ry="6.8" stroke="#ffc000" fill="none"/><ellipse cx="336.6" cy="274.8" rx="7.0" ry="5.6" stroke="#ffc000" fill="none"/><path d="M45.4 295.0 L46.5 306.3 L49.3 317.5 L52.7 326.5 L55.0 340.0 L56.6 351.3 L57.2 358.3" stroke="#f0f000" stroke-width="1" fill="none"/><path d="M50.5 295.0 L51.0 306.3 L53.8 317.5 L57.2 328.8 L58.9 340.0 L61.2 351.3 L62.8 358.3" stroke="#f0f000" stroke-width="1" fill="none"/><path d="M53.3 295.0 L53.8 304.0 L55.5 314.1 L60.0 325.4 L62.3 337.8 L64.5 349.1 L66.8 358.3" stroke="#ffc000" stroke-width="1" fill="none"/><path d="M57.2 295.0 L57.8 306.3 L61.2 317.5 L64.0 328.8 L65.7 340.0 L69.0 351.3 L71.9 358.3" stroke="#ff9a00" stroke-width="1" fill="none"/><path d="M62.3 295.0 L61.7 301.8 L60.0 305.1" stroke="#ff6a00" stroke-width="1" fill="none"/><path d="M63.4 313.0 L66.8 320.9 L68.5 331.0 L70.2 342.3 L73.5 351.3 L78.0 358.3" stroke="#ff6a00" stroke-width="1" fill="none"/><path d="M73.0 295.0 L66.8 302.9 L69.0 309.6 L76.9 315.3 L81.4 327.7 L76.9 335.5 L76.4 344.5 L82.5 352.4 L90.4 358.3" stroke="#ff4a10" stroke-width="1" fill="none"/><path d="M102.8 358.3 L111.8 350.2 L119.0 345.7" stroke="#ff4a10" stroke-width="1" fill="none"/><path d="M33.0 340.0 L34.7 341.2 L34.7 349.1 L33.0 350.2" stroke="#f0f000" stroke-width="1" fill="none"/><text x="58" y="313" font-size="9" fill="#ff6a00" font-family="Liberation Mono" transform="rotate(80 62 308)">35</text><path d="M56.6 358.0 L57.2 364.8 L55.5 369.3 L52.1 372.1 L44.3 373.2 L37.5 372.6 L33.0 371.5" stroke="#f0f000" stroke-width="1" fill="none"/><path d="M63.4 358.0 L65.7 362.5 L70.2 369.3 L72.4 373.8 L72.4 378.3 L69.0 381.6 L64.5 385.0 L57.8 387.3 L49.9 389.0 L42.0 391.2 L37.5 394.0 L33.6 396.9" stroke="#f0f000" stroke-width="1" fill="none"/><path d="M33.0 406.4 L37.5 410.9 L44.3 414.3 L53.3 416.6 L53.8 421.3" stroke="#f0f000" stroke-width="1" fill="none"/><path d="M66.8 358.0 L71.3 362.5 L76.9 367.0 L82.5 371.5 L85.4 377.1 L85.9 382.8 L88.2 391.8 L92.7 399.7 L97.2 407.5 L100.6 414.3 L102.3 421.3" stroke="#ffc000" stroke-width="1" fill="none"/><path d="M72.4 358.0 L78.0 362.5 L84.8 367.0 L90.4 372.6 L92.1 378.3 L92.7 382.8 L94.9 388.4 L100.6 394.0 L107.3 397.4 L114.1 400.8 L119.0 404.2" stroke="#ff9a00" stroke-width="1" fill="none"/><path d="M78.0 358.0 L85.9 361.4 L91.6 365.9 L97.2 371.5 L101.7 378.3 L105.1 382.2 L111.8 382.2 L119.0 381.1" stroke="#ff6a00" stroke-width="1" fill="none"/><path d="M91.6 358.0 L94.9 359.7 L100.6 360.3 L102.8 358.0" stroke="#ff4a10" stroke-width="1" fill="none"/><path d="M162.8 358.0 L167.4 371.7 L174.2 383.1 L183.3 388.8 L192.5 386.5 L194.7 376.2 L193.6 364.8 L194.7 358.0" stroke="#ff4a10" stroke-width="1" fill="none"/><path d="M91.1 358.0 L96.8 359.8 L101.3 358.0" stroke="#ff4a10" stroke-width="1" fill="none"/><path d="M135.5 359.1 L142.3 362.1 L149.2 360.7 L150.3 358.0" stroke="#ff4a10" stroke-width="1" fill="none"/><path d="M205.0 395.6 L190.2 399.0 L176.5 402.4 L172.0 407.0 L173.1 414.9 L178.8 422.9 L183.3 425.2 L192.5 417.2 L205.0 407.0" stroke="#ff4a10" stroke-width="1" fill="none"/><path d="M118.9 381.0 L130.9 373.5 L142.3 377.4 L151.5 387.6 L156.0 397.9 L157.8 412.7 L160.6 433.2 L166.3 449.1 L176.5 455.9 L185.6 456.4 L192.5 451.4 L201.6 437.7 L205.0 433.2" stroke="#ff6a00" stroke-width="1" fill="none"/><path d="M118.9 404.0 L133.2 403.6 L144.6 408.1 L151.5 419.5 L156.0 437.7 L162.8 455.9 L176.5 466.2 L192.5 469.6 L205.0 467.3" stroke="#ff9a00" stroke-width="1" fill="none"/><path d="M53.7 421.8 L53.7 423.4 L44.4 425.7 L33.0 429.8" stroke="#f0f000" stroke-width="1" fill="none"/><path d="M102.2 421.3 L107.0 433.2 L110.4 449.1 L109.3 465.1 L103.6 476.5 L94.5 486.0" stroke="#ffc000" stroke-width="1" fill="none"/><text x="163" y="371" font-size="9" fill="#ff4a10" font-family="Liberation Mono" transform="rotate(70 167 368)">35</text><path d="M226.6 360.0 L234.6 364.6 L239.2 373.7 L238.0 385.1 L230.1 396.4 L218.7 407.8 L205.0 419.2" stroke="#ff6a00" stroke-width="1" fill="none"/><path d="M254.0 360.0 L249.4 373.7 L250.6 385.1 L257.4 396.4 L264.2 404.4 L271.1 407.4 L280.2 405.6 L293.8 399.9 L300.7 401.0 L309.8 405.6 L321.2 409.0 L332.6 412.4 L344.0 415.8 L349.6 412.4 L350.8 398.7 L355.3 387.3 L364.5 373.7 L370.1 360.0" stroke="#ff9a00" stroke-width="1" fill="none"/><path d="M302.9 360.0 L296.1 364.6 L280.2 373.7 L268.8 385.1 L257.4 396.4 L254.0 403.3 L246.0 412.4 L236.9 421.5 L225.5 435.2 L218.7 437.4 L210.7 435.2 L209.6 442.0 L214.1 446.6 L223.2 439.7 L226.6 446.6 L227.8 455.7 L225.5 464.8 L217.5 472.8 L209.6 471.6 L205.0 467.1" stroke="#ff9a00" stroke-width="1" fill="none"/><path d="M268.8 360.0 L265.4 369.1 L269.9 374.8" stroke="#ffc000" stroke-width="1" fill="none"/><path d="M275.6 366.8 L284.7 360.0" stroke="#ffc000" stroke-width="1" fill="none"/><path d="M205.0 394.2 L206.8 396.4 L205.0 398.7" stroke="#ff4a10" stroke-width="1" fill="none"/><text x="262" y="370" font-size="9" fill="#ffc000" font-family="Liberation Mono" transform="rotate(70 267 367)">35</text><path d="M105.9 434.0 L110.4 445.4 L111.6 456.8 L108.2 470.4 L101.3 479.6 L94.5 486.4 L92.2 497.8 L85.4 505.8 L78.6 503.5 L71.7 505.8 L55.8 507.3 L44.4 504.6 L33.0 505.8" stroke="#ffc000" stroke-width="1" fill="none"/><path d="M205.0 479.6 L192.5 484.1 L186.8 497.8 L190.2 506.9 L201.6 511.4 L205.0 512.6" stroke="#ff9a00" stroke-width="1" fill="none"/><circle cx="163.3" cy="489.4" r="6.4" stroke="#ffc000" fill="none"/><path d="M205.0 479.6 L213.0 481.8 L217.5 495.5 L223.2 504.6 L230.1 511.4 L236.9 516.0" stroke="#ff9a00" stroke-width="1" fill="none"/><path d="M205.0 518.7 L214.1 520.6 L227.8 524.0 L234.6 520.6 L241.4 522.8 L257.4 524.0 L268.8 520.6 L275.6 520.6 L277.9 524.0 L282.4 521.7" stroke="#ff9a00" stroke-width="1" fill="none"/></g><g clip-path="url(#cr)" shape-rendering="crispEdges"><path d="M435.1 127.9 L439.6 127.9" stroke="#ffbe00" stroke-width="1" fill="none"/><path d="M456.3 127.5 L456.3 129.7" stroke="#ffbe00" stroke-width="1" fill="none"/><path d="M473.4 131.3 L475.6 127.9" stroke="#ffbe00" stroke-width="1" fill="none"/><path d="M492.5 127.2 L495.0 128.4" stroke="#ffbe00" stroke-width="1" fill="none"/><path d="M512.1 127.9 L513.7 130.7" stroke="#ffbe00" stroke-width="1" fill="none"/><path d="M529.2 130.7 L531.9 127.9" stroke="#ffbe00" stroke-width="1" fill="none"/><path d="M549.7 127.9 L554.2 127.9" stroke="#ffbe00" stroke-width="1" fill="none"/><path d="M569.5 128.6 L573.4 126.3" stroke="#ffbe00" stroke-width="1" fill="none"/><path d="M587.0 128.4 L590.0 128.4" stroke="#ffbe00" stroke-width="1" fill="none"/><path d="M438.5 145.7 L438.5 148.9" stroke="#ffbe00" stroke-width="1" fill="none"/><path d="M456.3 145.7 L456.7 149.6" stroke="#ffbe00" stroke-width="1" fill="none"/><path d="M474.0 148.4 L475.9 146.1" stroke="#ffbe00" stroke-width="1" fill="none"/><path d="M492.0 147.7 L495.0 146.1" stroke="#ffbe00" stroke-width="1" fill="none"/><path d="M510.9 148.0 L512.8 146.1" stroke="#ffbe00" stroke-width="1" fill="none"/><path d="M530.1 145.0 L531.9 146.8" stroke="#ffbe00" stroke-width="1" fill="none"/><path d="M550.1 146.4 L550.1 147.1" stroke="#ffbe00" stroke-width="1" fill="none"/><path d="M569.5 146.4 L569.5 147.1" stroke="#ffbe00" stroke-width="1" fill="none"/><path d="M587.0 146.6 L590.0 146.6" stroke="#ffbe00" stroke-width="1" fill="none"/><path d="M438.5 165.3 L438.5 166.0" stroke="#ffbe00" stroke-width="1" fill="none"/><path d="M455.6 165.0 L459.0 166.6" stroke="#ffbe00" stroke-width="1" fill="none"/><path d="M475.4 165.3 L475.4 166.0" stroke="#ffbe00" stroke-width="1" fill="none"/><path d="M493.2 167.3 L495.0 165.0" stroke="#ffbe00" stroke-width="1" fill="none"/><path d="M510.3 166.6 L513.2 165.0" stroke="#ffbe00" stroke-width="1" fill="none"/><path d="M528.9 166.6 L531.9 165.0" stroke="#ffbe00" stroke-width="1" fill="none"/><path d="M568.3 164.4 L569.9 166.2" stroke="#ffbe00" stroke-width="1" fill="none"/><path d="M419.1 184.9 L420.7 187.8" stroke="#ffbe00" stroke-width="1" fill="none"/><path d="M438.0 183.7 L439.9 187.1" stroke="#ffbe00" stroke-width="1" fill="none"/><path d="M456.3 183.7 L459.0 185.5" stroke="#ffbe00" stroke-width="1" fill="none"/><path d="M475.4 184.2 L475.4 184.9" stroke="#ffbe00" stroke-width="1" fill="none"/><path d="M494.3 184.2 L494.3 184.9" stroke="#ffbe00" stroke-width="1" fill="none"/><path d="M512.5 184.2 L512.5 184.9" stroke="#ffbe00" stroke-width="1" fill="none"/><path d="M529.2 184.4 L531.9 184.4" stroke="#ffbe00" stroke-width="1" fill="none"/><path d="M548.3 184.4 L551.3 184.4" stroke="#ffbe00" stroke-width="1" fill="none"/><path d="M569.5 184.2 L569.5 184.9" stroke="#ffbe00" stroke-width="1" fill="none"/><path d="M587.7 183.7 L589.3 186.0" stroke="#ffbe00" stroke-width="1" fill="none"/><path d="M419.1 201.9 L424.8 216.8" stroke="#ffbe00" stroke-width="1" fill="none"/><path d="M424.8 216.8 L423.1 215.4 M424.8 216.8 L425.2 214.6" stroke="#ffbe00" stroke-width="1" fill="none"/><path d="M438.0 201.9 L439.9 206.5" stroke="#ffbe00" stroke-width="1" fill="none"/><path d="M456.3 201.9 L456.3 204.7" stroke="#ffbe00" stroke-width="1" fill="none"/><path d="M473.8 205.4 L476.1 201.9" stroke="#ffbe00" stroke-width="1" fill="none"/><path d="M494.3 202.9 L494.3 203.5" stroke="#ffbe00" stroke-width="1" fill="none"/><path d="M512.5 202.9 L512.5 203.5" stroke="#ffbe00" stroke-width="1" fill="none"/><path d="M528.0 202.4 L531.9 202.4" stroke="#ffbe00" stroke-width="1" fill="none"/><path d="M546.2 203.8 L550.8 202.4" stroke="#ffbe00" stroke-width="1" fill="none"/><path d="M564.9 204.7 L569.9 201.9" stroke="#ffbe00" stroke-width="1" fill="none"/><path d="M587.7 201.9 L587.7 207.0" stroke="#ffbe00" stroke-width="1" fill="none"/><path d="M419.1 221.3 L422.6 231.6" stroke="#ffbe00" stroke-width="1" fill="none"/><path d="M422.6 231.6 L420.9 230.1 M422.6 231.6 L423.0 229.4" stroke="#ffbe00" stroke-width="1" fill="none"/><path d="M438.5 221.3 L440.8 231.6" stroke="#ffbe00" stroke-width="1" fill="none"/><path d="M440.8 231.6 L439.3 230.0 M440.8 231.6 L441.5 229.5" stroke="#ffbe00" stroke-width="1" fill="none"/><path d="M457.9 221.3 L460.1 222.5" stroke="#ffbe00" stroke-width="1" fill="none"/><path d="M474.9 221.3 L477.2 221.3" stroke="#ffbe00" stroke-width="1" fill="none"/><path d="M494.3 221.1 L494.3 221.8" stroke="#ffbe00" stroke-width="1" fill="none"/><path d="M527.3 222.9 L531.9 221.3" stroke="#ffbe00" stroke-width="1" fill="none"/><path d="M545.1 221.3 L550.8 221.3" stroke="#ffbe00" stroke-width="1" fill="none"/><path d="M563.8 223.6 L569.9 221.3" stroke="#ffbe00" stroke-width="1" fill="none"/><path d="M563.8 223.6 L565.2 221.9 M563.8 223.6 L565.9 224.0" stroke="#ffbe00" stroke-width="1" fill="none"/><path d="M586.6 221.3 L587.7 228.1" stroke="#ffbe00" stroke-width="1" fill="none"/><path d="M587.7 228.1 L586.3 226.5 M587.7 228.1 L588.5 226.1" stroke="#ffbe00" stroke-width="1" fill="none"/><path d="M515.9 113.1 L520.5 117.7 L529.6 117.7 L534.2 114.3 L543.3 110.8 L554.7 104.0" stroke="#00cc00" stroke-width="1" fill="none"/><path d="M515.9 113.1 L525.1 110.8 L529.6 107.4 L530.8 104.0" stroke="#00cc00" stroke-width="1" fill="none"/><path d="M534.2 104.0 L541.0 107.4 L547.8 104.0" stroke="#00cc00" stroke-width="1" fill="none"/><path d="M542.8 144.5 L549.0 141.6 L553.5 134.3 L558.1 138.2 L564.9 140.4 L559.2 141.6 L550.1 142.7 L542.8 144.5" stroke="#00cc00" stroke-width="1" fill="none"/><path d="M419.1 131.3 L421.4 138.2" stroke="#00cc00" stroke-width="1" fill="none"/><path d="M419.1 145.0 L421.4 147.3 L424.8 156.4 L427.1 163.2 L430.5 163.2 L428.3 170.1 L426.0 172.3 L431.7 183.7 L435.1 192.8 L437.4 204.2 L439.6 208.8" stroke="#00cc00" stroke-width="1" fill="none"/><path d="M418.0 156.4 L420.3 159.8" stroke="#00cc00" stroke-width="1" fill="none"/><path d="M418.0 167.8 L420.3 171.2" stroke="#00cc00" stroke-width="1" fill="none"/><path d="M431.7 205.4 L436.2 204.2 L445.3 211.1 L452.2 217.9 L459.0 221.3 L461.3 227.0 L462.4 232.0" stroke="#00cc00" stroke-width="1" fill="none"/><path d="M431.7 205.4 L435.1 211.1 L440.8 217.9 L447.6 224.7 L454.4 232.0" stroke="#00cc00" stroke-width="1" fill="none"/><path d="M590.0 158.7 L586.6 165.5 L586.1 172.3 L590.0 172.3" stroke="#00cc00" stroke-width="1" fill="none"/><path d="M587.4 127.9 L592.7 127.2" stroke="#ffbe00" stroke-width="1" fill="none"/><path d="M606.3 127.9 L612.5 127.2" stroke="#ffbe00" stroke-width="1" fill="none"/><path d="M612.5 127.2 L610.7 128.6 M612.5 127.2 L610.5 126.3" stroke="#ffbe00" stroke-width="1" fill="none"/><path d="M625.0 127.9 L630.7 127.9" stroke="#ffbe00" stroke-width="1" fill="none"/><path d="M644.4 127.9 L654.6 121.1" stroke="#ffbe00" stroke-width="1" fill="none"/><path d="M654.6 121.1 L653.7 123.1 M654.6 121.1 L652.4 121.2" stroke="#ffbe00" stroke-width="1" fill="none"/><path d="M662.6 127.9 L670.6 120.4" stroke="#ffbe00" stroke-width="1" fill="none"/><path d="M670.6 120.4 L670.0 122.5 M670.6 120.4 L668.4 120.9" stroke="#ffbe00" stroke-width="1" fill="none"/><path d="M681.3 127.9 L686.5 124.5" stroke="#ffbe00" stroke-width="1" fill="none"/><path d="M686.5 124.5 L685.5 126.5 M686.5 124.5 L684.3 124.6" stroke="#ffbe00" stroke-width="1" fill="none"/><path d="M696.8 127.9 L700.6 127.9" stroke="#ffbe00" stroke-width="1" fill="none"/><path d="M718.9 128.4 L716.1 137.0" stroke="#ffbe00" stroke-width="1" fill="none"/><path d="M716.1 137.0 L715.6 134.9 M716.1 137.0 L717.8 135.6" stroke="#ffbe00" stroke-width="1" fill="none"/><path d="M737.5 128.4 L740.7 132.5" stroke="#ffbe00" stroke-width="1" fill="none"/><path d="M587.4 146.6 L592.0 146.6" stroke="#ffbe00" stroke-width="1" fill="none"/><path d="M606.3 146.6 L610.9 148.4" stroke="#ffbe00" stroke-width="1" fill="none"/><path d="M625.0 146.6 L630.7 149.1" stroke="#ffbe00" stroke-width="1" fill="none"/><path d="M630.7 149.1 L628.5 149.4 M630.7 149.1 L629.4 147.3" stroke="#ffbe00" stroke-width="1" fill="none"/><path d="M644.4 147.3 L651.2 145.5" stroke="#ffbe00" stroke-width="1" fill="none"/><path d="M651.2 145.5 L649.7 147.0 M651.2 145.5 L649.1 144.8" stroke="#ffbe00" stroke-width="1" fill="none"/><path d="M662.6 146.1 L662.6 151.8" stroke="#ffbe00" stroke-width="1" fill="none"/><path d="M674.7 152.3 L681.9 146.8" stroke="#ffbe00" stroke-width="1" fill="none"/><path d="M674.7 152.3 L675.5 150.3 M674.7 152.3 L676.8 152.1" stroke="#ffbe00" stroke-width="1" fill="none"/><path d="M691.1 152.3 L700.6 146.8" stroke="#ffbe00" stroke-width="1" fill="none"/><path d="M691.1 152.3 L692.1 150.4 M691.1 152.3 L693.3 152.3" stroke="#ffbe00" stroke-width="1" fill="none"/><path d="M711.6 156.4 L718.4 147.3" stroke="#ffbe00" stroke-width="1" fill="none"/><path d="M711.6 156.4 L711.8 154.2 M711.6 156.4 L713.6 155.6" stroke="#ffbe00" stroke-width="1" fill="none"/><path d="M737.5 146.1 L737.5 153.0" stroke="#ffbe00" stroke-width="1" fill="none"/><path d="M737.5 153.0 L736.4 151.1 M737.5 153.0 L738.7 151.1" stroke="#ffbe00" stroke-width="1" fill="none"/><path d="M606.3 165.0 L608.6 168.9" stroke="#ffbe00" stroke-width="1" fill="none"/><path d="M625.0 165.0 L627.3 168.9" stroke="#ffbe00" stroke-width="1" fill="none"/><path d="M644.4 164.4 L644.4 168.9" stroke="#ffbe00" stroke-width="1" fill="none"/><path d="M656.9 175.8 L662.6 166.0" stroke="#ffbe00" stroke-width="1" fill="none"/><path d="M656.9 175.8 L656.9 173.6 M656.9 175.8 L658.8 174.7" stroke="#ffbe00" stroke-width="1" fill="none"/><path d="M671.7 173.5 L681.9 165.5" stroke="#ffbe00" stroke-width="1" fill="none"/><path d="M671.7 173.5 L672.5 171.4 M671.7 173.5 L673.9 173.2" stroke="#ffbe00" stroke-width="1" fill="none"/><path d="M687.6 170.1 L700.6 165.5" stroke="#ffbe00" stroke-width="1" fill="none"/><path d="M687.6 170.1 L689.0 168.4 M687.6 170.1 L689.8 170.5" stroke="#ffbe00" stroke-width="1" fill="none"/><path d="M712.0 173.5 L718.9 166.0" stroke="#ffbe00" stroke-width="1" fill="none"/><path d="M712.0 173.5 L712.4 171.3 M712.0 173.5 L714.1 172.8" stroke="#ffbe00" stroke-width="1" fill="none"/><path d="M737.5 164.4 L737.5 172.3" stroke="#ffbe00" stroke-width="1" fill="none"/><path d="M737.5 172.3 L736.4 170.5 M737.5 172.3 L738.7 170.5" stroke="#ffbe00" stroke-width="1" fill="none"/><path d="M753.7 167.8 L756.0 166.6" stroke="#ffbe00" stroke-width="1" fill="none"/><path d="M587.4 183.7 L588.6 186.5" stroke="#ffbe00" stroke-width="1" fill="none"/><path d="M606.3 183.7 L607.9 186.5" stroke="#ffbe00" stroke-width="1" fill="none"/><path d="M625.0 183.7 L626.6 187.8" stroke="#ffbe00" stroke-width="1" fill="none"/><path d="M644.4 183.7 L644.4 190.1" stroke="#ffbe00" stroke-width="1" fill="none"/><path d="M644.4 190.1 L643.2 188.2 M644.4 190.1 L645.5 188.2" stroke="#ffbe00" stroke-width="1" fill="none"/><path d="M662.6 183.7 L663.7 191.7" stroke="#ffbe00" stroke-width="1" fill="none"/><path d="M663.7 191.7 L662.3 190.0 M663.7 191.7 L664.6 189.7" stroke="#ffbe00" stroke-width="1" fill="none"/><path d="M677.4 185.5 L681.9 183.7" stroke="#ffbe00" stroke-width="1" fill="none"/><path d="M689.9 178.0 L700.6 184.2" stroke="#ffbe00" stroke-width="1" fill="none"/><path d="M689.9 178.0 L692.1 178.0 M689.9 178.0 L691.0 180.0" stroke="#ffbe00" stroke-width="1" fill="none"/><path d="M713.2 185.5 L718.9 184.2" stroke="#ffbe00" stroke-width="1" fill="none"/><path d="M737.5 183.7 L739.4 186.0" stroke="#ffbe00" stroke-width="1" fill="none"/><path d="M587.4 201.9 L587.4 207.6" stroke="#ffbe00" stroke-width="1" fill="none"/><path d="M606.3 201.9 L607.9 211.1" stroke="#ffbe00" stroke-width="1" fill="none"/><path d="M607.9 211.1 L606.5 209.4 M607.9 211.1 L608.7 209.0" stroke="#ffbe00" stroke-width="1" fill="none"/><path d="M623.9 208.8 L625.0 201.9" stroke="#ffbe00" stroke-width="1" fill="none"/><path d="M623.9 208.8 L623.1 206.7 M623.9 208.8 L625.3 207.1" stroke="#ffbe00" stroke-width="1" fill="none"/><path d="M644.4 201.9 L646.6 207.6" stroke="#ffbe00" stroke-width="1" fill="none"/><path d="M646.6 207.6 L644.9 206.3 M646.6 207.6 L647.0 205.5" stroke="#ffbe00" stroke-width="1" fill="none"/><path d="M662.6 202.4 L669.4 204.7" stroke="#ffbe00" stroke-width="1" fill="none"/><path d="M669.4 204.7 L667.3 205.2 M669.4 204.7 L668.0 203.0" stroke="#ffbe00" stroke-width="1" fill="none"/><path d="M681.3 201.9 L682.4 196.3" stroke="#ffbe00" stroke-width="1" fill="none"/><path d="M696.1 197.8 L700.6 202.4" stroke="#ffbe00" stroke-width="1" fill="none"/><path d="M696.1 197.8 L698.2 198.4 M696.1 197.8 L696.6 200.0" stroke="#ffbe00" stroke-width="1" fill="none"/><path d="M717.3 202.4 L718.9 200.8" stroke="#ffbe00" stroke-width="1" fill="none"/><path d="M737.5 202.4 L741.2 202.4" stroke="#ffbe00" stroke-width="1" fill="none"/><path d="M587.4 221.3 L587.4 228.1" stroke="#ffbe00" stroke-width="1" fill="none"/><path d="M587.4 228.1 L586.3 226.3 M587.4 228.1 L588.6 226.3" stroke="#ffbe00" stroke-width="1" fill="none"/><path d="M606.3 221.3 L609.1 231.6" stroke="#ffbe00" stroke-width="1" fill="none"/><path d="M609.1 231.6 L607.5 230.0 M609.1 231.6 L609.7 229.4" stroke="#ffbe00" stroke-width="1" fill="none"/><path d="M625.0 221.3 L629.6 224.3" stroke="#ffbe00" stroke-width="1" fill="none"/><path d="M644.4 221.3 L648.2 222.5" stroke="#ffbe00" stroke-width="1" fill="none"/><path d="M662.6 221.3 L666.0 220.2" stroke="#ffbe00" stroke-width="1" fill="none"/><path d="M681.3 221.3 L684.7 217.9" stroke="#ffbe00" stroke-width="1" fill="none"/><path d="M697.9 219.0 L700.6 222.0" stroke="#ffbe00" stroke-width="1" fill="none"/><path d="M716.1 220.6 L718.9 222.0" stroke="#ffbe00" stroke-width="1" fill="none"/><path d="M737.5 221.3 L741.2 220.2" stroke="#ffbe00" stroke-width="1" fill="none"/><path d="M652.3 104.0 L644.4 107.4 L643.2 113.1 L637.5 119.9 L633.0 131.3 L631.8 140.4 L634.1 148.4 L642.1 149.6 L644.4 158.7 L646.6 166.6 L653.5 164.4 L661.4 167.8 L668.3 171.2 L675.1 175.8 L684.2 179.2 L693.3 181.4 L704.7 183.7 L705.9 192.8 L708.1 199.7 L711.6 206.5 L720.7 219.0 L729.8 209.9 L726.4 199.7 L720.7 187.1 L729.8 179.2 L734.3 170.1 L732.1 158.7 L726.4 148.4 L720.7 142.7 L727.5 134.8 L725.2 126.8 L721.8 121.1 L720.7 113.1 L719.5 104.0" stroke="#00cc00" stroke-width="1" fill="none"/><path d="M691.1 104.0 L692.2 108.6 L697.9 107.4 L696.8 104.0" stroke="#00cc00" stroke-width="1" fill="none"/><path d="M708.8 105.8 L712.7 105.1 L713.8 113.1 L709.7 114.3 L708.8 105.8" stroke="#00cc00" stroke-width="1" fill="none"/><path d="M748.0 104.0 L752.6 107.4 L756.0 110.8" stroke="#00cc00" stroke-width="1" fill="none"/><path d="M586.3 172.3 L589.7 164.4 L588.6 160.9 L593.1 154.1 L595.4 159.8 L592.0 163.2 L590.8 170.1 L586.3 172.3" stroke="#00cc00" stroke-width="1" fill="none"/><path d="M716.1 172.3 L718.4 165.5 L723.0 168.9 L721.8 173.5 L716.1 172.3" stroke="#00cc00" stroke-width="1" fill="none"/><path d="M708.1 204.2 L711.6 200.8 L715.0 204.2 L709.3 205.4" stroke="#00cc00" stroke-width="1" fill="none"/><path d="M595.4 205.4 L601.1 205.4 L605.6 211.1 L606.8 200.8 L611.3 199.2 L615.9 204.2 L620.4 215.6 L622.7 227.0 L623.9 232.0" stroke="#00cc00" stroke-width="1" fill="none"/><path d="M595.4 205.4 L601.1 211.1 L602.2 217.9 L606.8 227.0 L611.3 232.0" stroke="#00cc00" stroke-width="1" fill="none"/><path d="M605.6 211.1 L611.3 217.9 L618.2 222.5 L621.6 232.0" stroke="#00cc00" stroke-width="1" fill="none"/><path d="M419.1 232.0 L422.6 235.4" stroke="#ffbe00" stroke-width="1" fill="none"/><path d="M438.5 232.0 L440.8 235.4" stroke="#ffbe00" stroke-width="1" fill="none"/><path d="M419.1 240.0 L420.7 253.6" stroke="#ffbe00" stroke-width="1" fill="none"/><path d="M420.7 253.6 L419.4 251.9 M420.7 253.6 L421.6 251.6" stroke="#ffbe00" stroke-width="1" fill="none"/><path d="M438.5 240.0 L443.1 256.6" stroke="#ffbe00" stroke-width="1" fill="none"/><path d="M443.1 256.6 L441.5 255.1 M443.1 256.6 L443.7 254.5" stroke="#ffbe00" stroke-width="1" fill="none"/><path d="M474.9 240.7 L478.4 245.2" stroke="#ffbe00" stroke-width="1" fill="none"/><path d="M511.4 240.7 L515.9 240.7" stroke="#ffbe00" stroke-width="1" fill="none"/><path d="M530.1 239.3 L531.9 240.7" stroke="#ffbe00" stroke-width="1" fill="none"/><path d="M544.4 238.4 L551.3 240.7" stroke="#ffbe00" stroke-width="1" fill="none"/><path d="M544.4 238.4 L546.6 237.9 M544.4 238.4 L545.9 240.1" stroke="#ffbe00" stroke-width="1" fill="none"/><path d="M566.1 240.7 L570.2 240.7" stroke="#ffbe00" stroke-width="1" fill="none"/><path d="M587.7 240.7 L589.3 244.5" stroke="#ffbe00" stroke-width="1" fill="none"/><path d="M419.1 257.1 L419.8 274.1" stroke="#ffbe00" stroke-width="1" fill="none"/><path d="M419.8 274.1 L418.6 272.3 M419.8 274.1 L420.9 272.2" stroke="#ffbe00" stroke-width="1" fill="none"/><path d="M438.5 259.3 L438.0 275.3" stroke="#ffbe00" stroke-width="1" fill="none"/><path d="M438.0 275.3 L437.0 273.4 M438.0 275.3 L439.2 273.4" stroke="#ffbe00" stroke-width="1" fill="none"/><path d="M455.6 259.3 L460.1 261.6" stroke="#ffbe00" stroke-width="1" fill="none"/><path d="M474.9 259.3 L481.8 261.2" stroke="#ffbe00" stroke-width="1" fill="none"/><path d="M481.8 261.2 L479.7 261.8 M481.8 261.2 L480.3 259.6" stroke="#ffbe00" stroke-width="1" fill="none"/><path d="M493.9 259.8 L497.7 257.5" stroke="#ffbe00" stroke-width="1" fill="none"/><path d="M512.5 259.1 L512.5 259.8" stroke="#ffbe00" stroke-width="1" fill="none"/><path d="M531.4 259.3 L533.0 258.2" stroke="#ffbe00" stroke-width="1" fill="none"/><path d="M545.6 258.9 L551.3 259.8" stroke="#ffbe00" stroke-width="1" fill="none"/><path d="M563.3 262.8 L569.5 259.8" stroke="#ffbe00" stroke-width="1" fill="none"/><path d="M563.3 262.8 L564.5 260.9 M563.3 262.8 L565.5 263.0" stroke="#ffbe00" stroke-width="1" fill="none"/><path d="M586.6 262.8 L588.4 258.9" stroke="#ffbe00" stroke-width="1" fill="none"/><path d="M419.1 275.3 L419.1 277.6" stroke="#ffbe00" stroke-width="1" fill="none"/><path d="M431.7 291.2 L438.5 277.6" stroke="#ffbe00" stroke-width="1" fill="none"/><path d="M431.7 291.2 L431.5 289.0 M431.7 291.2 L433.5 290.0" stroke="#ffbe00" stroke-width="1" fill="none"/><path d="M456.3 277.6 L457.9 278.7" stroke="#ffbe00" stroke-width="1" fill="none"/><path d="M475.4 277.6 L475.4 282.6" stroke="#ffbe00" stroke-width="1" fill="none"/><path d="M492.7 281.0 L495.0 277.6" stroke="#ffbe00" stroke-width="1" fill="none"/><path d="M512.5 277.3 L512.5 278.0" stroke="#ffbe00" stroke-width="1" fill="none"/><path d="M531.4 277.6 L533.0 277.6" stroke="#ffbe00" stroke-width="1" fill="none"/><path d="M549.0 276.4 L550.8 278.0" stroke="#ffbe00" stroke-width="1" fill="none"/><path d="M567.2 276.4 L570.2 278.0" stroke="#ffbe00" stroke-width="1" fill="none"/><path d="M587.7 274.1 L588.8 277.6" stroke="#ffbe00" stroke-width="1" fill="none"/><path d="M418.0 296.9 L419.8 296.9" stroke="#ffbe00" stroke-width="1" fill="none"/><path d="M435.8 303.1 L438.0 296.9" stroke="#ffbe00" stroke-width="1" fill="none"/><path d="M435.8 303.1 L435.4 300.9 M435.8 303.1 L437.5 301.7" stroke="#ffbe00" stroke-width="1" fill="none"/><path d="M456.3 296.5 L458.5 296.5" stroke="#ffbe00" stroke-width="1" fill="none"/><path d="M474.9 296.2 L479.0 298.1" stroke="#ffbe00" stroke-width="1" fill="none"/><path d="M493.9 296.5 L496.6 296.5" stroke="#ffbe00" stroke-width="1" fill="none"/><path d="M512.5 294.0 L512.5 296.9" stroke="#ffbe00" stroke-width="1" fill="none"/><path d="M530.8 296.5 L532.4 296.5" stroke="#ffbe00" stroke-width="1" fill="none"/><path d="M549.7 293.5 L550.6 296.9" stroke="#ffbe00" stroke-width="1" fill="none"/><path d="M567.2 293.0 L569.5 296.9" stroke="#ffbe00" stroke-width="1" fill="none"/><path d="M587.7 293.0 L587.7 296.9" stroke="#ffbe00" stroke-width="1" fill="none"/><path d="M418.0 315.1 L419.8 315.8" stroke="#ffbe00" stroke-width="1" fill="none"/><path d="M437.4 315.6 L439.0 315.6" stroke="#ffbe00" stroke-width="1" fill="none"/><path d="M456.3 314.9 L456.3 315.6" stroke="#ffbe00" stroke-width="1" fill="none"/><path d="M474.9 315.1 L479.0 318.1" stroke="#ffbe00" stroke-width="1" fill="none"/><path d="M494.3 314.9 L494.3 315.6" stroke="#ffbe00" stroke-width="1" fill="none"/><path d="M510.3 312.9 L513.2 315.8" stroke="#ffbe00" stroke-width="1" fill="none"/><path d="M530.8 315.1 L533.7 316.7" stroke="#ffbe00" stroke-width="1" fill="none"/><path d="M549.7 312.9 L550.6 316.3" stroke="#ffbe00" stroke-width="1" fill="none"/><path d="M568.3 311.7 L569.5 315.8" stroke="#ffbe00" stroke-width="1" fill="none"/><path d="M587.7 308.3 L589.3 315.8" stroke="#ffbe00" stroke-width="1" fill="none"/><path d="M587.7 308.3 L589.2 309.9 M587.7 308.3 L587.0 310.4" stroke="#ffbe00" stroke-width="1" fill="none"/><path d="M418.0 332.2 L419.1 339.1" stroke="#ffbe00" stroke-width="1" fill="none"/><path d="M419.1 339.1 L417.7 337.4 M419.1 339.1 L419.9 337.0" stroke="#ffbe00" stroke-width="1" fill="none"/><path d="M438.5 334.1 L440.8 335.6" stroke="#ffbe00" stroke-width="1" fill="none"/><path d="M455.6 334.1 L459.0 335.6" stroke="#ffbe00" stroke-width="1" fill="none"/><path d="M475.4 334.1 L475.4 334.7" stroke="#ffbe00" stroke-width="1" fill="none"/><path d="M493.9 334.5 L495.9 332.2" stroke="#ffbe00" stroke-width="1" fill="none"/><path d="M512.5 334.1 L512.5 335.6" stroke="#ffbe00" stroke-width="1" fill="none"/><path d="M530.1 332.2 L531.4 334.5" stroke="#ffbe00" stroke-width="1" fill="none"/><path d="M549.7 332.2 L550.6 334.5" stroke="#ffbe00" stroke-width="1" fill="none"/><path d="M568.3 334.1 L570.2 330.4" stroke="#ffbe00" stroke-width="1" fill="none"/><path d="M586.6 334.1 L588.8 329.9" stroke="#ffbe00" stroke-width="1" fill="none"/><path d="M438.5 351.6 L439.6 358.4" stroke="#ffbe00" stroke-width="1" fill="none"/><path d="M439.6 358.4 L438.2 356.8 M439.6 358.4 L440.4 356.4" stroke="#ffbe00" stroke-width="1" fill="none"/><path d="M455.6 352.3 L459.0 354.6" stroke="#ffbe00" stroke-width="1" fill="none"/><path d="M474.5 352.7 L477.7 350.5" stroke="#ffbe00" stroke-width="1" fill="none"/><path d="M493.9 352.7 L495.4 348.6" stroke="#ffbe00" stroke-width="1" fill="none"/><path d="M511.4 351.6 L514.8 353.9" stroke="#ffbe00" stroke-width="1" fill="none"/><path d="M528.5 351.6 L531.9 352.7" stroke="#ffbe00" stroke-width="1" fill="none"/><path d="M549.7 352.7 L550.6 353.9" stroke="#ffbe00" stroke-width="1" fill="none"/><path d="M568.3 352.3 L570.2 353.9" stroke="#ffbe00" stroke-width="1" fill="none"/><path d="M586.6 352.7 L589.3 349.3" stroke="#ffbe00" stroke-width="1" fill="none"/><path d="M447.6 232.0 L448.8 241.1 L448.8 252.5 L452.2 253.6" stroke="#00cc00" stroke-width="1" fill="none"/><path d="M448.8 252.5 L445.3 259.3 L440.8 273.0 L437.4 282.1 L439.6 293.5 L435.1 302.6 L436.2 311.7 L440.8 323.1 L445.3 325.4 L443.1 332.2 L444.2 341.3 L447.6 350.5 L452.2 357.3 L454.4 360.0" stroke="#00cc00" stroke-width="1" fill="none"/><path d="M449.9 232.0 L457.9 235.4 L462.4 232.0" stroke="#00cc00" stroke-width="1" fill="none"/><path d="M455.6 240.0 L459.0 242.3 L461.3 240.0 L462.4 235.4" stroke="#00cc00" stroke-width="1" fill="none"/><path d="M587.4 240.7 L589.0 244.5" stroke="#ffbe00" stroke-width="1" fill="none"/><path d="M606.3 240.7 L609.1 245.2" stroke="#ffbe00" stroke-width="1" fill="none"/><path d="M625.0 240.7 L629.6 243.4" stroke="#ffbe00" stroke-width="1" fill="none"/><path d="M644.4 240.7 L646.6 238.4" stroke="#ffbe00" stroke-width="1" fill="none"/><path d="M662.6 240.7 L664.9 236.1" stroke="#ffbe00" stroke-width="1" fill="none"/><path d="M681.3 240.7 L682.4 236.1" stroke="#ffbe00" stroke-width="1" fill="none"/><path d="M700.2 240.7 L702.5 236.1" stroke="#ffbe00" stroke-width="1" fill="none"/><path d="M718.4 240.7 L720.7 237.7" stroke="#ffbe00" stroke-width="1" fill="none"/><path d="M737.1 240.7 L740.0 238.4" stroke="#ffbe00" stroke-width="1" fill="none"/><path d="M586.3 262.8 L587.4 259.3" stroke="#ffbe00" stroke-width="1" fill="none"/><path d="M606.3 259.3 L607.9 261.6" stroke="#ffbe00" stroke-width="1" fill="none"/><path d="M625.0 259.3 L626.1 257.1" stroke="#ffbe00" stroke-width="1" fill="none"/><path d="M644.4 260.5 L645.5 254.8" stroke="#ffbe00" stroke-width="1" fill="none"/><path d="M662.6 259.3 L663.7 255.9" stroke="#ffbe00" stroke-width="1" fill="none"/><path d="M681.3 254.8 L682.4 259.3" stroke="#ffbe00" stroke-width="1" fill="none"/><path d="M699.9 257.5 L700.6 259.3" stroke="#ffbe00" stroke-width="1" fill="none"/><path d="M718.4 259.3 L721.8 257.5" stroke="#ffbe00" stroke-width="1" fill="none"/><path d="M737.1 258.9 L737.8 259.8" stroke="#ffbe00" stroke-width="1" fill="none"/><path d="M586.7 277.6 L588.1 274.1" stroke="#ffbe00" stroke-width="1" fill="none"/><path d="M606.3 277.6 L607.9 275.3" stroke="#ffbe00" stroke-width="1" fill="none"/><path d="M625.0 273.0 L625.5 277.6" stroke="#ffbe00" stroke-width="1" fill="none"/><path d="M643.7 277.6 L645.5 274.1" stroke="#ffbe00" stroke-width="1" fill="none"/><path d="M662.6 277.6 L663.7 275.3" stroke="#ffbe00" stroke-width="1" fill="none"/><path d="M681.3 277.6 L682.4 276.4" stroke="#ffbe00" stroke-width="1" fill="none"/><path d="M699.9 277.3 L699.9 278.0" stroke="#ffbe00" stroke-width="1" fill="none"/><path d="M737.1 277.6 L740.0 277.6" stroke="#ffbe00" stroke-width="1" fill="none"/><path d="M586.7 296.9 L587.4 293.0" stroke="#ffbe00" stroke-width="1" fill="none"/><path d="M606.3 296.9 L609.5 293.0" stroke="#ffbe00" stroke-width="1" fill="none"/><path d="M625.0 291.7 L625.5 296.9" stroke="#ffbe00" stroke-width="1" fill="none"/><path d="M643.7 296.9 L645.5 293.0" stroke="#ffbe00" stroke-width="1" fill="none"/><path d="M662.6 296.9 L664.9 293.5" stroke="#ffbe00" stroke-width="1" fill="none"/><path d="M681.3 296.9 L683.1 296.9" stroke="#ffbe00" stroke-width="1" fill="none"/><path d="M699.9 296.0 L699.9 296.7" stroke="#ffbe00" stroke-width="1" fill="none"/><path d="M718.4 296.9 L720.2 293.5" stroke="#ffbe00" stroke-width="1" fill="none"/><path d="M586.7 316.3 L588.6 309.4" stroke="#ffbe00" stroke-width="1" fill="none"/><path d="M588.6 309.4 L589.2 311.6 M588.6 309.4 L587.0 311.0" stroke="#ffbe00" stroke-width="1" fill="none"/><path d="M606.3 315.6 L611.3 309.4" stroke="#ffbe00" stroke-width="1" fill="none"/><path d="M611.3 309.4 L611.0 311.6 M611.3 309.4 L609.3 310.2" stroke="#ffbe00" stroke-width="1" fill="none"/><path d="M625.0 315.6 L627.3 311.7" stroke="#ffbe00" stroke-width="1" fill="none"/><path d="M643.7 315.6 L646.0 312.2" stroke="#ffbe00" stroke-width="1" fill="none"/><path d="M662.6 315.6 L664.2 312.2" stroke="#ffbe00" stroke-width="1" fill="none"/><path d="M681.3 315.6 L686.5 313.5" stroke="#ffbe00" stroke-width="1" fill="none"/><path d="M699.9 315.6 L704.7 309.4" stroke="#ffbe00" stroke-width="1" fill="none"/><path d="M704.7 309.4 L704.5 311.6 M704.7 309.4 L702.7 310.2" stroke="#ffbe00" stroke-width="1" fill="none"/><path d="M718.4 315.6 L720.2 310.6" stroke="#ffbe00" stroke-width="1" fill="none"/><path d="M737.1 315.6 L739.4 311.7" stroke="#ffbe00" stroke-width="1" fill="none"/><path d="M586.7 334.3 L588.1 330.4" stroke="#ffbe00" stroke-width="1" fill="none"/><path d="M606.3 334.3 L608.6 331.1" stroke="#ffbe00" stroke-width="1" fill="none"/><path d="M625.0 334.3 L625.5 331.1" stroke="#ffbe00" stroke-width="1" fill="none"/><path d="M643.7 334.3 L645.0 330.4" stroke="#ffbe00" stroke-width="1" fill="none"/><path d="M662.6 334.3 L664.2 330.4" stroke="#ffbe00" stroke-width="1" fill="none"/><path d="M681.3 334.3 L685.4 329.5" stroke="#ffbe00" stroke-width="1" fill="none"/><path d="M685.4 329.5 L685.0 331.7 M685.4 329.5 L683.3 330.2" stroke="#ffbe00" stroke-width="1" fill="none"/><path d="M699.9 334.3 L704.3 329.5" stroke="#ffbe00" stroke-width="1" fill="none"/><path d="M704.3 329.5 L703.8 331.7 M704.3 329.5 L702.2 330.1" stroke="#ffbe00" stroke-width="1" fill="none"/><path d="M718.4 334.3 L720.2 329.5" stroke="#ffbe00" stroke-width="1" fill="none"/><path d="M737.1 334.3 L741.2 332.2" stroke="#ffbe00" stroke-width="1" fill="none"/><path d="M585.1 355.0 L587.4 353.0" stroke="#ffbe00" stroke-width="1" fill="none"/><path d="M602.2 353.9 L606.3 353.0" stroke="#ffbe00" stroke-width="1" fill="none"/><path d="M620.9 351.6 L625.5 352.3" stroke="#ffbe00" stroke-width="1" fill="none"/><path d="M643.7 352.0 L643.7 352.7" stroke="#ffbe00" stroke-width="1" fill="none"/><path d="M662.6 353.0 L663.7 349.3" stroke="#ffbe00" stroke-width="1" fill="none"/><path d="M681.3 353.0 L682.4 349.3" stroke="#ffbe00" stroke-width="1" fill="none"/><path d="M699.9 353.0 L701.3 348.2" stroke="#ffbe00" stroke-width="1" fill="none"/><path d="M718.4 353.0 L720.2 350.5" stroke="#ffbe00" stroke-width="1" fill="none"/><path d="M737.1 353.0 L738.9 350.5" stroke="#ffbe00" stroke-width="1" fill="none"/><path d="M650.1 267.3 L656.9 261.6 L663.7 255.9 L675.1 244.5 L684.2 246.8 L689.9 252.5 L694.5 253.6 L696.8 261.6 L697.9 266.2 L691.1 265.0 L684.2 268.4 L679.7 266.2 L675.1 259.3 L674.0 263.9 L668.3 263.9 L660.3 268.4 L656.9 265.0 L650.1 267.3" stroke="#00cc00" stroke-width="1" fill="none"/><path d="M702.5 275.3 L697.9 274.1 L691.1 277.6 L687.6 288.9 L688.8 300.3 L687.6 310.6 L681.9 310.6 L678.5 300.3 L679.7 284.4 L676.3 285.5 L681.9 274.1 L693.3 271.9 L700.2 268.4 L720.7 268.4 L727.5 274.1 L728.6 279.8 L720.7 278.7 L718.4 286.7 L719.5 293.5 L715.0 295.8 L710.4 290.1 L704.7 292.4 L708.1 282.1 L704.7 275.3 L702.5 275.3" stroke="#00cc00" stroke-width="1" fill="none"/><path d="M708.1 308.3 L718.4 310.6 L732.1 300.3 L738.9 295.8 L736.6 292.4 L729.8 295.8 L718.4 301.5 L708.1 308.3" stroke="#00cc00" stroke-width="1" fill="none"/><path d="M732.1 293.5 L743.5 287.8 L754.8 281.0 L753.7 287.8 L743.5 291.2 L732.1 293.5" stroke="#00cc00" stroke-width="1" fill="none"/><path d="M607.9 233.1 L611.3 232.0" stroke="#00cc00" stroke-width="1" fill="none"/><path d="M618.2 233.1 L621.6 232.0" stroke="#00cc00" stroke-width="1" fill="none"/><path d="M418.0 371.4 L419.1 370.9" stroke="#ffbe00" stroke-width="1" fill="none"/><path d="M436.2 375.5 L438.5 371.4" stroke="#ffbe00" stroke-width="1" fill="none"/><path d="M456.3 371.4 L460.1 373.2" stroke="#ffbe00" stroke-width="1" fill="none"/><path d="M475.2 371.2 L475.2 371.8" stroke="#ffbe00" stroke-width="1" fill="none"/><path d="M493.9 371.4 L497.7 368.7" stroke="#ffbe00" stroke-width="1" fill="none"/><path d="M512.5 371.4 L513.7 371.4" stroke="#ffbe00" stroke-width="1" fill="none"/><path d="M531.4 371.2 L531.4 371.8" stroke="#ffbe00" stroke-width="1" fill="none"/><path d="M545.6 371.4 L550.6 371.4" stroke="#ffbe00" stroke-width="1" fill="none"/><path d="M568.8 371.4 L570.2 371.4" stroke="#ffbe00" stroke-width="1" fill="none"/><path d="M587.7 370.3 L589.3 371.4" stroke="#ffbe00" stroke-width="1" fill="none"/><path d="M418.0 390.3 L419.8 390.3" stroke="#ffbe00" stroke-width="1" fill="none"/><path d="M434.4 391.4 L438.5 390.3" stroke="#ffbe00" stroke-width="1" fill="none"/><path d="M456.3 390.3 L459.0 383.9" stroke="#ffbe00" stroke-width="1" fill="none"/><path d="M459.0 383.9 L459.3 386.1 M459.0 383.9 L457.2 385.2" stroke="#ffbe00" stroke-width="1" fill="none"/><path d="M475.2 390.3 L477.7 389.6" stroke="#ffbe00" stroke-width="1" fill="none"/><path d="M493.9 390.3 L495.4 385.5" stroke="#ffbe00" stroke-width="1" fill="none"/><path d="M512.5 390.3 L514.8 389.2" stroke="#ffbe00" stroke-width="1" fill="none"/><path d="M531.4 390.3 L536.5 392.3" stroke="#ffbe00" stroke-width="1" fill="none"/><path d="M566.1 393.7 L569.5 390.3" stroke="#ffbe00" stroke-width="1" fill="none"/><path d="M587.7 384.6 L587.7 390.8" stroke="#ffbe00" stroke-width="1" fill="none"/><path d="M587.7 384.6 L588.8 386.5 M587.7 384.6 L586.6 386.5" stroke="#ffbe00" stroke-width="1" fill="none"/><path d="M418.0 412.4 L419.8 408.3" stroke="#ffbe00" stroke-width="1" fill="none"/><path d="M438.5 408.3 L427.1 410.6" stroke="#ffbe00" stroke-width="1" fill="none"/><path d="M427.1 410.6 L428.7 409.1 M427.1 410.6 L429.2 411.3" stroke="#ffbe00" stroke-width="1" fill="none"/><path d="M456.3 408.3 L451.0 396.0" stroke="#ffbe00" stroke-width="1" fill="none"/><path d="M451.0 396.0 L452.8 397.3 M451.0 396.0 L450.7 398.2" stroke="#ffbe00" stroke-width="1" fill="none"/><path d="M475.2 408.3 L478.4 406.7" stroke="#ffbe00" stroke-width="1" fill="none"/><path d="M493.9 409.0 L495.4 405.6" stroke="#ffbe00" stroke-width="1" fill="none"/><path d="M512.5 408.1 L512.5 408.7" stroke="#ffbe00" stroke-width="1" fill="none"/><path d="M531.4 408.3 L534.6 408.3" stroke="#ffbe00" stroke-width="1" fill="none"/><path d="M550.1 409.0 L554.2 407.4" stroke="#ffbe00" stroke-width="1" fill="none"/><path d="M566.1 405.1 L569.5 409.0" stroke="#ffbe00" stroke-width="1" fill="none"/><path d="M583.8 401.0 L587.7 409.0" stroke="#ffbe00" stroke-width="1" fill="none"/><path d="M583.8 401.0 L585.7 402.2 M583.8 401.0 L583.6 403.2" stroke="#ffbe00" stroke-width="1" fill="none"/><path d="M418.0 427.7 L419.8 427.7" stroke="#ffbe00" stroke-width="1" fill="none"/><path d="M438.0 427.2 L441.9 429.5" stroke="#ffbe00" stroke-width="1" fill="none"/><path d="M456.3 427.7 L456.3 415.8" stroke="#ffbe00" stroke-width="1" fill="none"/><path d="M456.3 415.8 L457.4 417.7 M456.3 415.8 L455.1 417.7" stroke="#ffbe00" stroke-width="1" fill="none"/><path d="M475.2 427.7 L476.8 423.8" stroke="#ffbe00" stroke-width="1" fill="none"/><path d="M493.9 427.7 L497.3 426.5" stroke="#ffbe00" stroke-width="1" fill="none"/><path d="M511.4 424.9 L513.2 427.7" stroke="#ffbe00" stroke-width="1" fill="none"/><path d="M531.4 427.4 L531.4 428.1" stroke="#ffbe00" stroke-width="1" fill="none"/><path d="M550.1 426.5 L552.4 431.1" stroke="#ffbe00" stroke-width="1" fill="none"/><path d="M567.2 426.5 L569.5 427.7" stroke="#ffbe00" stroke-width="1" fill="none"/><path d="M583.8 424.9 L587.7 427.7" stroke="#ffbe00" stroke-width="1" fill="none"/><path d="M418.0 446.3 L419.8 444.3" stroke="#ffbe00" stroke-width="1" fill="none"/><path d="M438.0 446.3 L440.3 442.0" stroke="#ffbe00" stroke-width="1" fill="none"/><path d="M456.3 446.3 L458.5 438.6" stroke="#ffbe00" stroke-width="1" fill="none"/><path d="M458.5 438.6 L459.1 440.7 M458.5 438.6 L456.9 440.1" stroke="#ffbe00" stroke-width="1" fill="none"/><path d="M475.2 446.3 L476.8 442.5" stroke="#ffbe00" stroke-width="1" fill="none"/><path d="M493.9 446.3 L495.4 444.7" stroke="#ffbe00" stroke-width="1" fill="none"/><path d="M512.5 446.3 L513.7 444.3" stroke="#ffbe00" stroke-width="1" fill="none"/><path d="M529.6 445.4 L531.9 446.3" stroke="#ffbe00" stroke-width="1" fill="none"/><path d="M550.1 446.3 L552.4 447.7" stroke="#ffbe00" stroke-width="1" fill="none"/><path d="M567.2 444.7 L569.5 446.3" stroke="#ffbe00" stroke-width="1" fill="none"/><path d="M585.4 443.1 L587.7 446.3" stroke="#ffbe00" stroke-width="1" fill="none"/><path d="M419.1 465.0 L422.1 465.0" stroke="#ffbe00" stroke-width="1" fill="none"/><path d="M438.5 460.2 L438.5 465.0" stroke="#ffbe00" stroke-width="1" fill="none"/><path d="M454.4 462.5 L456.3 465.0" stroke="#ffbe00" stroke-width="1" fill="none"/><path d="M472.7 464.3 L476.1 465.0" stroke="#ffbe00" stroke-width="1" fill="none"/><path d="M493.2 463.0 L494.3 465.0" stroke="#ffbe00" stroke-width="1" fill="none"/><path d="M531.4 465.0 L533.0 464.3" stroke="#ffbe00" stroke-width="1" fill="none"/><path d="M550.1 465.0 L551.9 465.0" stroke="#ffbe00" stroke-width="1" fill="none"/><path d="M567.2 464.3 L569.5 465.0" stroke="#ffbe00" stroke-width="1" fill="none"/><path d="M585.4 462.5 L587.7 465.0" stroke="#ffbe00" stroke-width="1" fill="none"/><path d="M418.0 483.7 L419.8 483.7" stroke="#ffbe00" stroke-width="1" fill="none"/><path d="M433.5 483.7 L438.5 483.7" stroke="#ffbe00" stroke-width="1" fill="none"/><path d="M451.0 484.1 L456.3 483.7" stroke="#ffbe00" stroke-width="1" fill="none"/><path d="M471.5 478.5 L475.2 483.7" stroke="#ffbe00" stroke-width="1" fill="none"/><path d="M471.5 478.5 L473.5 479.4 M471.5 478.5 L471.7 480.6" stroke="#ffbe00" stroke-width="1" fill="none"/><path d="M490.9 480.7 L493.9 483.7" stroke="#ffbe00" stroke-width="1" fill="none"/><path d="M509.1 482.6 L512.5 483.7" stroke="#ffbe00" stroke-width="1" fill="none"/><path d="M527.3 481.9 L531.4 483.7" stroke="#ffbe00" stroke-width="1" fill="none"/><path d="M547.8 481.9 L550.6 484.8" stroke="#ffbe00" stroke-width="1" fill="none"/><path d="M567.2 482.6 L570.2 484.8" stroke="#ffbe00" stroke-width="1" fill="none"/><path d="M586.6 483.0 L589.3 484.8" stroke="#ffbe00" stroke-width="1" fill="none"/><path d="M454.4 360.0 L464.7 364.6 L471.5 370.3 L472.7 382.8 L476.1 394.2 L478.4 405.6 L486.3 412.4 L489.8 419.2 L485.2 422.6 L480.6 421.5 L484.1 426.1 L490.9 431.8 L498.9 437.4 L500.0 447.7 L497.7 451.1 L509.1 455.7 L513.7 460.2 L518.2 465.9 L513.7 469.3" stroke="#00cc00" stroke-width="1" fill="none"/><path d="M487.5 389.6 L486.3 402.1 L490.9 406.7 L496.6 416.9 L503.4 428.3 L505.7 438.6 L509.1 451.1 L513.7 460.2" stroke="#00cc00" stroke-width="1" fill="none"/><path d="M487.5 389.6 L493.2 390.8 L498.9 395.3 L498.9 399.9 L504.6 414.7 L511.4 426.1 L521.6 438.6 L520.5 446.6 L529.6 451.1 L536.5 460.2 L545.6 471.6 L550.1 485.3 L550.1 488.0" stroke="#00cc00" stroke-width="1" fill="none"/><path d="M587.4 371.2 L587.4 371.8" stroke="#ffbe00" stroke-width="1" fill="none"/><path d="M603.4 365.7 L606.8 371.4" stroke="#ffbe00" stroke-width="1" fill="none"/><path d="M603.4 365.7 L605.3 366.7 M603.4 365.7 L603.4 367.9" stroke="#ffbe00" stroke-width="1" fill="none"/><path d="M623.2 366.4 L625.7 371.4" stroke="#ffbe00" stroke-width="1" fill="none"/><path d="M643.7 371.4 L646.6 368.0" stroke="#ffbe00" stroke-width="1" fill="none"/><path d="M662.6 371.4 L666.0 363.4" stroke="#ffbe00" stroke-width="1" fill="none"/><path d="M666.0 363.4 L666.3 365.6 M666.0 363.4 L664.2 364.7" stroke="#ffbe00" stroke-width="1" fill="none"/><path d="M680.1 367.3 L681.9 371.4" stroke="#ffbe00" stroke-width="1" fill="none"/><path d="M699.9 371.4 L702.0 369.1" stroke="#ffbe00" stroke-width="1" fill="none"/><path d="M718.4 371.2 L718.4 371.8" stroke="#ffbe00" stroke-width="1" fill="none"/><path d="M735.5 365.7 L737.5 371.4" stroke="#ffbe00" stroke-width="1" fill="none"/><path d="M735.5 365.7 L737.2 367.1 M735.5 365.7 L735.1 367.9" stroke="#ffbe00" stroke-width="1" fill="none"/><path d="M587.4 386.2 L587.4 390.3" stroke="#ffbe00" stroke-width="1" fill="none"/><path d="M606.3 390.3 L605.6 379.4" stroke="#ffbe00" stroke-width="1" fill="none"/><path d="M605.6 379.4 L606.9 381.2 M605.6 379.4 L604.6 381.3" stroke="#ffbe00" stroke-width="1" fill="none"/><path d="M625.0 390.3 L625.0 382.8" stroke="#ffbe00" stroke-width="1" fill="none"/><path d="M625.0 382.8 L626.1 384.7 M625.0 382.8 L623.9 384.7" stroke="#ffbe00" stroke-width="1" fill="none"/><path d="M643.7 390.3 L645.5 382.3" stroke="#ffbe00" stroke-width="1" fill="none"/><path d="M645.5 382.3 L646.2 384.4 M645.5 382.3 L644.0 383.9" stroke="#ffbe00" stroke-width="1" fill="none"/><path d="M662.6 390.3 L664.9 378.7" stroke="#ffbe00" stroke-width="1" fill="none"/><path d="M664.9 378.7 L665.6 380.7 M664.9 378.7 L663.4 380.3" stroke="#ffbe00" stroke-width="1" fill="none"/><path d="M681.3 390.3 L685.4 382.8" stroke="#ffbe00" stroke-width="1" fill="none"/><path d="M685.4 382.8 L685.5 385.0 M685.4 382.8 L683.5 383.9" stroke="#ffbe00" stroke-width="1" fill="none"/><path d="M699.9 390.3 L703.6 388.5" stroke="#ffbe00" stroke-width="1" fill="none"/><path d="M718.4 390.3 L720.7 385.5" stroke="#ffbe00" stroke-width="1" fill="none"/><path d="M737.5 390.3 L735.5 379.4" stroke="#ffbe00" stroke-width="1" fill="none"/><path d="M735.5 379.4 L736.9 381.0 M735.5 379.4 L734.7 381.4" stroke="#ffbe00" stroke-width="1" fill="none"/><path d="M584.0 401.0 L587.4 409.0" stroke="#ffbe00" stroke-width="1" fill="none"/><path d="M584.0 401.0 L585.8 402.3 M584.0 401.0 L583.7 403.2" stroke="#ffbe00" stroke-width="1" fill="none"/><path d="M605.0 402.1 L606.3 409.0" stroke="#ffbe00" stroke-width="1" fill="none"/><path d="M605.0 402.1 L606.4 403.8 M605.0 402.1 L604.2 404.2" stroke="#ffbe00" stroke-width="1" fill="none"/><path d="M621.6 401.0 L625.5 409.0" stroke="#ffbe00" stroke-width="1" fill="none"/><path d="M621.6 401.0 L623.4 402.2 M621.6 401.0 L621.4 403.2" stroke="#ffbe00" stroke-width="1" fill="none"/><path d="M640.9 400.5 L644.4 409.0" stroke="#ffbe00" stroke-width="1" fill="none"/><path d="M640.9 400.5 L642.7 401.9 M640.9 400.5 L640.6 402.7" stroke="#ffbe00" stroke-width="1" fill="none"/><path d="M659.2 401.0 L663.3 409.0" stroke="#ffbe00" stroke-width="1" fill="none"/><path d="M659.2 401.0 L661.0 402.2 M659.2 401.0 L659.0 403.2" stroke="#ffbe00" stroke-width="1" fill="none"/><path d="M681.3 409.0 L684.2 404.4" stroke="#ffbe00" stroke-width="1" fill="none"/><path d="M699.9 409.0 L707.0 404.4" stroke="#ffbe00" stroke-width="1" fill="none"/><path d="M707.0 404.4 L706.0 406.4 M707.0 404.4 L704.8 404.5" stroke="#ffbe00" stroke-width="1" fill="none"/><path d="M718.4 409.0 L724.1 403.3" stroke="#ffbe00" stroke-width="1" fill="none"/><path d="M724.1 403.3 L723.6 405.4 M724.1 403.3 L722.0 403.8" stroke="#ffbe00" stroke-width="1" fill="none"/><path d="M732.5 401.0 L737.5 409.0" stroke="#ffbe00" stroke-width="1" fill="none"/><path d="M732.5 401.0 L734.5 402.0 M732.5 401.0 L732.6 403.2" stroke="#ffbe00" stroke-width="1" fill="none"/><path d="M584.0 424.9 L587.4 427.7" stroke="#ffbe00" stroke-width="1" fill="none"/><path d="M601.8 421.5 L606.3 427.7" stroke="#ffbe00" stroke-width="1" fill="none"/><path d="M601.8 421.5 L603.8 422.3 M601.8 421.5 L602.0 423.7" stroke="#ffbe00" stroke-width="1" fill="none"/><path d="M617.7 416.9 L625.0 427.7" stroke="#ffbe00" stroke-width="1" fill="none"/><path d="M617.7 416.9 L619.7 417.9 M617.7 416.9 L617.8 419.1" stroke="#ffbe00" stroke-width="1" fill="none"/><path d="M637.5 418.1 L644.4 427.7" stroke="#ffbe00" stroke-width="1" fill="none"/><path d="M637.5 418.1 L639.5 419.0 M637.5 418.1 L637.7 420.3" stroke="#ffbe00" stroke-width="1" fill="none"/><path d="M655.8 418.8 L662.6 427.7" stroke="#ffbe00" stroke-width="1" fill="none"/><path d="M655.8 418.8 L657.8 419.6 M655.8 418.8 L656.0 421.0" stroke="#ffbe00" stroke-width="1" fill="none"/><path d="M672.8 418.1 L681.9 427.7" stroke="#ffbe00" stroke-width="1" fill="none"/><path d="M672.8 418.1 L675.0 418.7 M672.8 418.1 L673.3 420.2" stroke="#ffbe00" stroke-width="1" fill="none"/><path d="M697.9 423.8 L700.6 427.7" stroke="#ffbe00" stroke-width="1" fill="none"/><path d="M715.0 427.7 L718.9 427.7" stroke="#ffbe00" stroke-width="1" fill="none"/><path d="M728.6 425.6 L737.5 427.7" stroke="#ffbe00" stroke-width="1" fill="none"/><path d="M728.6 425.6 L730.7 424.9 M728.6 425.6 L730.2 427.1" stroke="#ffbe00" stroke-width="1" fill="none"/><path d="M585.1 443.1 L587.4 446.3" stroke="#ffbe00" stroke-width="1" fill="none"/><path d="M600.4 438.6 L606.3 446.3" stroke="#ffbe00" stroke-width="1" fill="none"/><path d="M600.4 438.6 L602.4 439.4 M600.4 438.6 L600.6 440.8" stroke="#ffbe00" stroke-width="1" fill="none"/><path d="M614.8 435.2 L625.5 446.3" stroke="#ffbe00" stroke-width="1" fill="none"/><path d="M614.8 435.2 L616.9 435.7 M614.8 435.2 L615.2 437.3" stroke="#ffbe00" stroke-width="1" fill="none"/><path d="M631.8 438.6 L644.4 446.3" stroke="#ffbe00" stroke-width="1" fill="none"/><path d="M631.8 438.6 L634.0 438.6 M631.8 438.6 L632.8 440.5" stroke="#ffbe00" stroke-width="1" fill="none"/><path d="M650.1 439.3 L662.6 446.3" stroke="#ffbe00" stroke-width="1" fill="none"/><path d="M650.1 439.3 L652.3 439.2 M650.1 439.3 L651.1 441.2" stroke="#ffbe00" stroke-width="1" fill="none"/><path d="M670.6 443.1 L681.9 446.3" stroke="#ffbe00" stroke-width="1" fill="none"/><path d="M670.6 443.1 L672.7 442.6 M670.6 443.1 L672.1 444.7" stroke="#ffbe00" stroke-width="1" fill="none"/><path d="M692.2 447.7 L700.6 446.3" stroke="#ffbe00" stroke-width="1" fill="none"/><path d="M692.2 447.7 L693.9 446.3 M692.2 447.7 L694.2 448.5" stroke="#ffbe00" stroke-width="1" fill="none"/><path d="M710.4 451.1 L718.9 446.3" stroke="#ffbe00" stroke-width="1" fill="none"/><path d="M710.4 451.1 L711.5 449.2 M710.4 451.1 L712.6 451.2" stroke="#ffbe00" stroke-width="1" fill="none"/><path d="M729.8 448.4 L737.5 446.3" stroke="#ffbe00" stroke-width="1" fill="none"/><path d="M729.8 448.4 L731.3 446.8 M729.8 448.4 L731.9 449.0" stroke="#ffbe00" stroke-width="1" fill="none"/><path d="M746.9 447.7 L756.0 445.4" stroke="#ffbe00" stroke-width="1" fill="none"/><path d="M746.9 447.7 L748.4 446.1 M746.9 447.7 L749.0 448.3" stroke="#ffbe00" stroke-width="1" fill="none"/><path d="M585.1 462.5 L587.4 465.0" stroke="#ffbe00" stroke-width="1" fill="none"/><path d="M603.4 460.2 L606.3 465.0" stroke="#ffbe00" stroke-width="1" fill="none"/><path d="M614.8 458.4 L625.5 465.0" stroke="#ffbe00" stroke-width="1" fill="none"/><path d="M614.8 458.4 L617.0 458.4 M614.8 458.4 L615.8 460.4" stroke="#ffbe00" stroke-width="1" fill="none"/><path d="M630.7 457.9 L644.4 465.0" stroke="#ffbe00" stroke-width="1" fill="none"/><path d="M630.7 457.9 L632.9 457.8 M630.7 457.9 L631.9 459.8" stroke="#ffbe00" stroke-width="1" fill="none"/><path d="M646.6 463.6 L662.6 465.0" stroke="#ffbe00" stroke-width="1" fill="none"/><path d="M646.6 463.6 L648.6 462.7 M646.6 463.6 L648.4 464.9" stroke="#ffbe00" stroke-width="1" fill="none"/><path d="M667.1 465.0 L681.9 465.0" stroke="#ffbe00" stroke-width="1" fill="none"/><path d="M667.1 465.0 L669.0 463.9 M667.1 465.0 L669.0 466.1" stroke="#ffbe00" stroke-width="1" fill="none"/><path d="M689.9 468.2 L700.6 465.0" stroke="#ffbe00" stroke-width="1" fill="none"/><path d="M689.9 468.2 L691.4 466.6 M689.9 468.2 L692.1 468.7" stroke="#ffbe00" stroke-width="1" fill="none"/><path d="M709.3 469.3 L718.9 465.0" stroke="#ffbe00" stroke-width="1" fill="none"/><path d="M709.3 469.3 L710.5 467.5 M709.3 469.3 L711.5 469.6" stroke="#ffbe00" stroke-width="1" fill="none"/><path d="M728.6 467.1 L737.5 465.0" stroke="#ffbe00" stroke-width="1" fill="none"/><path d="M728.6 467.1 L730.2 465.5 M728.6 467.1 L730.7 467.7" stroke="#ffbe00" stroke-width="1" fill="none"/><path d="M746.9 467.1 L756.0 464.8" stroke="#ffbe00" stroke-width="1" fill="none"/><path d="M746.9 467.1 L748.4 465.5 M746.9 467.1 L749.0 467.7" stroke="#ffbe00" stroke-width="1" fill="none"/><path d="M613.6 479.6 L625.5 483.7" stroke="#ffbe00" stroke-width="1" fill="none"/><path d="M613.6 479.6 L615.8 479.1 M613.6 479.6 L615.0 481.3" stroke="#ffbe00" stroke-width="1" fill="none"/><path d="M631.8 481.9 L644.4 483.7" stroke="#ffbe00" stroke-width="1" fill="none"/><path d="M631.8 481.9 L633.9 481.0 M631.8 481.9 L633.5 483.3" stroke="#ffbe00" stroke-width="1" fill="none"/><path d="M649.6 485.3 L662.6 483.7" stroke="#ffbe00" stroke-width="1" fill="none"/><path d="M649.6 485.3 L651.3 483.9 M649.6 485.3 L651.6 486.2" stroke="#ffbe00" stroke-width="1" fill="none"/><path d="M670.6 484.1 L681.9 483.7" stroke="#ffbe00" stroke-width="1" fill="none"/><path d="M670.6 484.1 L672.4 482.9 M670.6 484.1 L672.5 485.2" stroke="#ffbe00" stroke-width="1" fill="none"/><path d="M691.1 486.4 L700.6 483.7" stroke="#ffbe00" stroke-width="1" fill="none"/><path d="M691.1 486.4 L692.6 484.8 M691.1 486.4 L693.2 487.0" stroke="#ffbe00" stroke-width="1" fill="none"/><path d="M711.6 486.4 L718.9 483.7" stroke="#ffbe00" stroke-width="1" fill="none"/><path d="M711.6 486.4 L712.9 484.7 M711.6 486.4 L713.7 486.8" stroke="#ffbe00" stroke-width="1" fill="none"/><path d="M729.8 486.4 L737.5 483.7" stroke="#ffbe00" stroke-width="1" fill="none"/><path d="M729.8 486.4 L731.2 484.7 M729.8 486.4 L731.9 486.9" stroke="#ffbe00" stroke-width="1" fill="none"/><path d="M609.1 488.0 L608.6 476.2 L611.3 460.2 L613.6 446.6 L614.8 432.9 L622.7 427.2 L630.7 419.2 L633.0 416.9 L643.2 414.7 L655.8 415.8 L659.2 420.4 L668.3 420.4 L672.8 418.1 L670.6 414.7 L674.0 411.3 L668.3 411.3 L666.0 412.8 L672.8 409.0 L683.1 407.8 L693.3 407.8 L702.5 412.4 L707.0 413.5 L713.8 410.1 L720.7 415.8 L725.2 423.8 L725.2 432.9 L729.8 439.7 L736.6 447.7 L741.2 451.1 L744.6 446.6 L745.7 435.2 L742.3 426.1 L734.3 412.4 L732.1 404.4 L730.9 396.4 L734.3 387.3 L738.9 382.8 L744.6 378.2 L748.0 373.7 L756.0 366.8" stroke="#00cc00" stroke-width="1" fill="none"/><path d="M732.1 455.7 L736.2 453.4" stroke="#00cc00" stroke-width="1" fill="none"/><path d="M713.8 480.7 L720.7 473.9 L729.8 469.3 L738.9 467.1 L750.3 468.2 L756.0 469.3" stroke="#00cc00" stroke-width="1" fill="none"/><path d="M718.4 478.5 L725.2 476.2 L732.1 473.9 L743.5 476.2 L756.0 478.5" stroke="#00cc00" stroke-width="1" fill="none"/><path d="M725.2 478.5 L729.8 483.0" stroke="#00cc00" stroke-width="1" fill="none"/><path d="M679.7 488.0 L688.8 485.3 L697.9 486.4" stroke="#00cc00" stroke-width="1" fill="none"/><path d="M418.0 502.6 L419.8 501.9" stroke="#ffbe00" stroke-width="1" fill="none"/><path d="M434.4 500.5 L438.5 502.6" stroke="#ffbe00" stroke-width="1" fill="none"/><path d="M456.3 498.9 L456.3 502.6" stroke="#ffbe00" stroke-width="1" fill="none"/><path d="M474.5 493.7 L475.2 502.6" stroke="#ffbe00" stroke-width="1" fill="none"/><path d="M474.5 493.7 L475.8 495.5 M474.5 493.7 L473.5 495.6" stroke="#ffbe00" stroke-width="1" fill="none"/><path d="M489.3 500.1 L493.9 502.6" stroke="#ffbe00" stroke-width="1" fill="none"/><path d="M505.7 502.6 L512.5 502.6" stroke="#ffbe00" stroke-width="1" fill="none"/><path d="M505.7 502.6 L507.6 501.4 M505.7 502.6 L507.6 503.7" stroke="#ffbe00" stroke-width="1" fill="none"/><path d="M522.8 504.2 L531.4 502.6" stroke="#ffbe00" stroke-width="1" fill="none"/><path d="M522.8 504.2 L524.4 502.7 M522.8 504.2 L524.8 504.9" stroke="#ffbe00" stroke-width="1" fill="none"/><path d="M547.8 501.9 L550.6 502.6" stroke="#ffbe00" stroke-width="1" fill="none"/><path d="M568.8 501.9 L569.5 502.6" stroke="#ffbe00" stroke-width="1" fill="none"/><path d="M586.6 500.5 L587.7 502.6" stroke="#ffbe00" stroke-width="1" fill="none"/><path d="M418.0 521.2 L419.1 519.4" stroke="#ffbe00" stroke-width="1" fill="none"/><path d="M438.5 521.7 L445.3 511.9" stroke="#ffbe00" stroke-width="1" fill="none"/><path d="M445.3 511.9 L445.2 514.1 M445.3 511.9 L443.3 512.8" stroke="#ffbe00" stroke-width="1" fill="none"/><path d="M455.6 521.2 L460.1 518.7" stroke="#ffbe00" stroke-width="1" fill="none"/><path d="M474.5 521.2 L476.1 517.1" stroke="#ffbe00" stroke-width="1" fill="none"/><path d="M493.2 521.2 L495.4 520.6" stroke="#ffbe00" stroke-width="1" fill="none"/><path d="M512.5 521.2 L513.7 521.2" stroke="#ffbe00" stroke-width="1" fill="none"/><path d="M521.6 522.8 L531.4 521.2" stroke="#ffbe00" stroke-width="1" fill="none"/><path d="M521.6 522.8 L523.3 521.4 M521.6 522.8 L523.7 523.7" stroke="#ffbe00" stroke-width="1" fill="none"/><path d="M542.8 521.7 L550.6 521.2" stroke="#ffbe00" stroke-width="1" fill="none"/><path d="M542.8 521.7 L544.6 520.5 M542.8 521.7 L544.8 522.7" stroke="#ffbe00" stroke-width="1" fill="none"/><path d="M566.1 520.1 L569.5 521.2" stroke="#ffbe00" stroke-width="1" fill="none"/><path d="M585.4 519.4 L587.7 521.2" stroke="#ffbe00" stroke-width="1" fill="none"/><path d="M517.1 434.0 L521.6 439.7 L520.5 444.3 L528.5 447.7 L531.9 454.5 L536.5 463.6 L542.1 472.7 L549.0 483.0 L550.1 488.7 L546.7 493.2 L547.8 500.1 L552.4 504.6 L559.2 509.2 L568.3 514.9 L577.5 518.3 L586.6 522.8 L590.0 525.1" stroke="#00cc00" stroke-width="1" fill="none"/><path d="M587.4 501.2 L587.4 502.6" stroke="#ffbe00" stroke-width="1" fill="none"/><path d="M606.3 501.7 L606.3 502.3" stroke="#ffbe00" stroke-width="1" fill="none"/><path d="M620.4 501.2 L625.5 502.6" stroke="#ffbe00" stroke-width="1" fill="none"/><path d="M633.0 504.6 L644.4 501.9" stroke="#ffbe00" stroke-width="1" fill="none"/><path d="M633.0 504.6 L634.5 503.1 M633.0 504.6 L635.1 505.3" stroke="#ffbe00" stroke-width="1" fill="none"/><path d="M654.6 501.9 L662.6 502.6" stroke="#ffbe00" stroke-width="1" fill="none"/><path d="M654.6 501.9 L656.6 500.9 M654.6 501.9 L656.4 503.2" stroke="#ffbe00" stroke-width="1" fill="none"/><path d="M676.3 503.5 L681.9 501.7" stroke="#ffbe00" stroke-width="1" fill="none"/><path d="M692.2 507.3 L700.6 501.7" stroke="#ffbe00" stroke-width="1" fill="none"/><path d="M692.2 507.3 L693.1 505.4 M692.2 507.3 L694.4 507.2" stroke="#ffbe00" stroke-width="1" fill="none"/><path d="M712.7 505.8 L718.9 501.7" stroke="#ffbe00" stroke-width="1" fill="none"/><path d="M712.7 505.8 L713.6 503.8 M712.7 505.8 L714.9 505.7" stroke="#ffbe00" stroke-width="1" fill="none"/><path d="M730.9 504.2 L737.5 501.7" stroke="#ffbe00" stroke-width="1" fill="none"/><path d="M730.9 504.2 L732.3 502.4 M730.9 504.2 L733.1 504.6" stroke="#ffbe00" stroke-width="1" fill="none"/><path d="M750.3 504.6 L756.0 501.7" stroke="#ffbe00" stroke-width="1" fill="none"/><path d="M750.3 504.6 L751.4 502.7 M750.3 504.6 L752.5 504.8" stroke="#ffbe00" stroke-width="1" fill="none"/><path d="M586.3 521.2 L587.4 520.6" stroke="#ffbe00" stroke-width="1" fill="none"/><path d="M605.6 519.4 L606.3 521.2" stroke="#ffbe00" stroke-width="1" fill="none"/><path d="M623.9 520.6 L625.5 521.2" stroke="#ffbe00" stroke-width="1" fill="none"/><path d="M659.2 519.4 L662.6 521.2" stroke="#ffbe00" stroke-width="1" fill="none"/><path d="M678.5 521.2 L681.9 521.2" stroke="#ffbe00" stroke-width="1" fill="none"/><path d="M689.9 522.8 L700.6 521.2" stroke="#ffbe00" stroke-width="1" fill="none"/><path d="M689.9 522.8 L691.6 521.4 M689.9 522.8 L692.0 523.7" stroke="#ffbe00" stroke-width="1" fill="none"/><path d="M710.4 526.3 L718.9 520.6" stroke="#ffbe00" stroke-width="1" fill="none"/><path d="M710.4 526.3 L711.4 524.3 M710.4 526.3 L712.6 526.1" stroke="#ffbe00" stroke-width="1" fill="none"/><path d="M732.1 528.5 L737.5 520.6" stroke="#ffbe00" stroke-width="1" fill="none"/><path d="M732.1 528.5 L732.2 526.3 M732.1 528.5 L734.1 527.6" stroke="#ffbe00" stroke-width="1" fill="none"/><path d="M751.4 528.5 L756.0 520.6" stroke="#ffbe00" stroke-width="1" fill="none"/><path d="M751.4 528.5 L751.4 526.3 M751.4 528.5 L753.3 527.5" stroke="#ffbe00" stroke-width="1" fill="none"/><path d="M625.0 511.4 L643.2 513.7 L661.4 511.4 L667.1 502.3 L668.3 489.8 L675.1 487.5 L684.2 486.4 L695.6 486.4 L695.6 493.2 L692.2 502.3 L688.8 516.0 L686.5 531.0" stroke="#00cc00" stroke-width="1" fill="none"/><path d="M584.0 522.8 L593.1 526.3 L602.2 531.0" stroke="#00cc00" stroke-width="1" fill="none"/><path d="M613.6 488.0 L612.5 488.7 L618.2 500.1 L622.7 506.9 L625.0 511.4" stroke="#00cc00" stroke-width="1" fill="none"/></g><g shape-rendering="crispEdges"><text x="96" y="518.5" font-size="11" fill="#fff" font-family="Liberation Mono" letter-spacing="0.6" style="white-space:pre">Time = 2006-07-27 18:00:00 MDT</text><text x="96" y="529.5" font-size="11" fill="#fff" font-family="Liberation Mono" letter-spacing="0.6" style="white-space:pre">] of ]]</text><text x="475" y="518.5" font-size="11" fill="#fff" font-family="Liberation Mono" letter-spacing="0.6" style="white-space:pre">Time = 2006-07-28 00:00:00 MDT</text><text x="475" y="529.5" font-size="11" fill="#fff" font-family="Liberation Mono" letter-spacing="0.6" style="white-space:pre">] of ]</text></g></svg>
<div class="a" style="left:7px;top:538px;width:178px;height:18px;border-top:1px solid #666;border-left:1px solid #666;border-right:1px solid #fff;border-bottom:1px solid #fff"></div>
<div class="a" style="left:185px;top:538px;width:444px;height:18px;border-top:1px solid #666;border-left:1px solid #666;border-right:1px solid #fff;border-bottom:1px solid #fff"></div>
<div class="a" style="left:629px;top:538px;width:129px;height:18px;border-top:1px solid #666;border-left:1px solid #666;border-right:1px solid #fff;border-bottom:1px solid #fff"></div>
<div class="a txt" style="left:14px;top:541px;font-weight:bold;font-size:12px;line-height:14px;white-space:nowrap;letter-spacing:1.15px">Memory: 160/276/533 MB</div>
</body></html>
